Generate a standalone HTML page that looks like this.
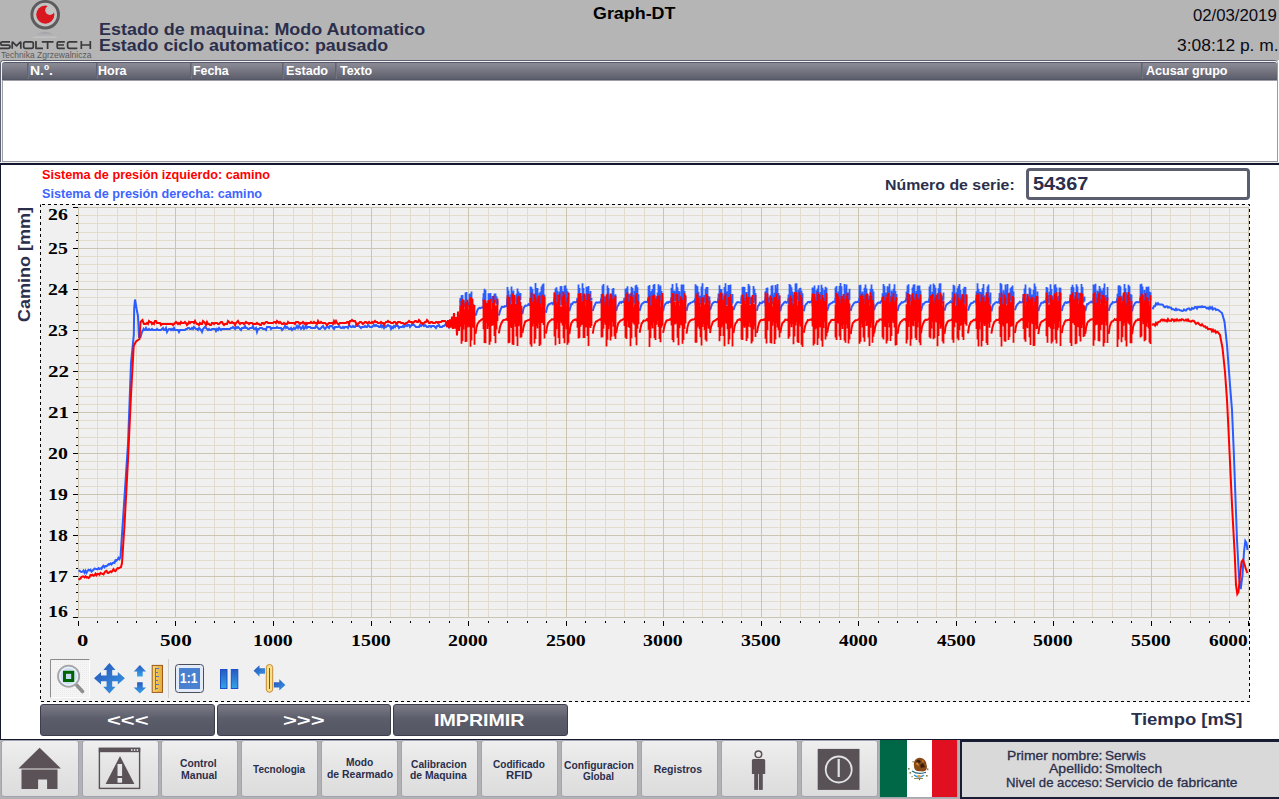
<!DOCTYPE html>
<html><head><meta charset="utf-8"><style>
html,body{margin:0;padding:0;}
body{width:1279px;height:799px;overflow:hidden;position:relative;background:#fff;font-family:"Liberation Sans", sans-serif;}
.a{position:absolute;box-sizing:border-box;}
.t{position:absolute;white-space:pre;line-height:1;}
</style></head><body>
<!-- header -->
<div class="a" style="left:0;top:0;width:1279px;height:61px;background:#b5b5b5"></div>
<div class="a" style="left:0;top:61px;width:3px;height:102px;background:#b5b5b5"></div>
<!-- logo -->
<svg class="a" style="left:0;top:0" width="95" height="61" viewBox="0 0 95 61">
  <defs><linearGradient id="refl" x1="0" y1="0" x2="0" y2="1"><stop offset="0" stop-color="#9c9ca4"/><stop offset="0.6" stop-color="#b4b4b6"/><stop offset="1" stop-color="#c8c8c8"/></linearGradient></defs>
  <circle cx="45.2" cy="14.7" r="12" fill="#c3c3c3"/>
  <circle cx="45.2" cy="14.7" r="13.3" fill="none" stroke="#5c5c5e" stroke-width="2.9"/>
  <circle cx="45.3" cy="14.6" r="9.1" fill="#d8171f"/>
  <circle cx="49.9" cy="10.3" r="4.7" fill="#c3c3c3"/>
  <path d="M 32.5 38 Q 45 25.5 57.5 38 Z" fill="url(#refl)" opacity="0.85"/>
  <g fill="none" stroke="#3a3a3c" stroke-width="1.7" stroke-linejoin="round">
    <path d="M 10 41.8 H 2.5 Q 0.8 41.8 0.8 43.5 V 44 Q 0.8 45.2 2.5 45.2 H 8.3 Q 10 45.2 10 46.8 V 46.5 Q 10 48.3 8.3 48.3 H 0"/>
    <path d="M 12.2 48.8 V 42.4 Q 12.2 41.8 12.8 42.2 L 16.5 45.8 L 20.2 42.2 Q 20.8 41.8 20.8 42.4 V 48.8"/>
    <path d="M 25.5 41.8 H 31.5 Q 33.3 41.8 33.3 43.6 V 46.5 Q 33.3 48.3 31.5 48.3 H 25.5 Q 23.7 48.3 23.7 46.5 V 43.6 Q 23.7 41.8 25.5 41.8 Z"/>
    <path d="M 36 41 V 48.3 H 43"/>
    <path d="M 41.8 41.8 H 53.5 M 47.6 41.8 V 49"/>
    <path d="M 64.8 41.8 H 58.5 Q 57.2 41.8 57.2 43.2 V 46.9 Q 57.2 48.3 58.5 48.3 H 64.8 M 57.2 45 H 64"/>
    <path d="M 77.3 41.8 H 69.5 Q 67.6 41.8 67.6 43.6 V 46.5 Q 67.6 48.3 69.5 48.3 H 77.3"/>
    <path d="M 81.3 41 V 49 M 90.3 41 V 49 M 81.3 45 H 90.3"/>
  </g>
</svg>
<!-- alarm table -->
<div class="a" style="left:1278px;top:60px;width:1px;height:103px;background:#fff"></div>
<div class="a" style="left:0;top:60px;width:1278px;height:103px;border:1px solid #5f6270;border-right-color:#9a9aa5;border-radius:4px 4px 0 0;background:#fff"></div>
<div class="a" style="left:1px;top:61px;width:1276px;height:101px;border:1px solid #f4f4f4;border-right:0;border-radius:3px 3px 0 0"></div>
<div class="a" style="left:2px;top:62px;width:1275px;height:18px;background:linear-gradient(#8c8c97,#5d5e6b);border-top:1px solid #55586a;border-bottom:1px solid #545766;border-radius:3px 3px 0 0"></div>
<div class="a" style="left:2px;top:80px;width:1275px;height:1px;background:#a0a0aa"></div>
<div class="a" style="left:2px;top:80px;width:1px;height:82px;background:#a0a0aa"></div>
<div class="a" style="left:2px;top:161px;width:1276px;height:1px;background:#9a9aa5"></div>
<div class="a" style="left:0;top:162px;width:1279px;height:1px;background:#ececee"></div>
<div class="a" style="left:27px;top:63px;width:2px;height:16px;background:linear-gradient(90deg,#595c6a,#7a7b87)"></div><div class="a" style="left:96px;top:63px;width:2px;height:16px;background:linear-gradient(90deg,#595c6a,#7a7b87)"></div><div class="a" style="left:190px;top:63px;width:2px;height:16px;background:linear-gradient(90deg,#595c6a,#7a7b87)"></div><div class="a" style="left:282px;top:63px;width:2px;height:16px;background:linear-gradient(90deg,#595c6a,#7a7b87)"></div><div class="a" style="left:335px;top:63px;width:2px;height:16px;background:linear-gradient(90deg,#595c6a,#7a7b87)"></div><div class="a" style="left:1141px;top:63px;width:2px;height:16px;background:linear-gradient(90deg,#595c6a,#7a7b87)"></div>
<!-- main -->
<div class="a" style="left:0;top:163px;width:1279px;height:2px;background:#14182e"></div>
<div class="a" style="left:0;top:163px;width:1px;height:577px;background:#14182e"></div>
<div class="a" style="left:0;top:739px;width:1279px;height:1px;background:#14182e"></div>
<!-- serial input -->
<div class="a" style="left:1026px;top:168px;width:224px;height:32px;border:3px solid #5a5e6e;border-radius:4px;background:#fff"></div>
<!-- chart box -->
<div class="a" style="left:40px;top:204px;width:1210px;height:498px;background:#f0f0f0"></div>
<svg class="a" style="left:0;top:0" width="1279" height="799"><rect x="40.5" y="204.5" width="1209" height="497" fill="none" stroke="#000" stroke-width="1" stroke-dasharray="3 3" stroke-dashoffset="-1.5"/></svg>
<svg class="a" style="left:0;top:0" width="1279" height="799" viewBox="0 0 1279 799">
<rect x='78' y='207' width='1170' height='410' fill='#f0f0f0'/>
<line x1='78' x2='1248' y1='609.5' y2='609.5' stroke='#e1dccb' stroke-width='1'/>
<line x1='78' x2='1248' y1='601.5' y2='601.5' stroke='#e1dccb' stroke-width='1'/>
<line x1='78' x2='1248' y1='592.5' y2='592.5' stroke='#e1dccb' stroke-width='1'/>
<line x1='78' x2='1248' y1='584.5' y2='584.5' stroke='#e1dccb' stroke-width='1'/>
<line x1='78' x2='1248' y1='568.5' y2='568.5' stroke='#e1dccb' stroke-width='1'/>
<line x1='78' x2='1248' y1='560.5' y2='560.5' stroke='#e1dccb' stroke-width='1'/>
<line x1='78' x2='1248' y1='551.5' y2='551.5' stroke='#e1dccb' stroke-width='1'/>
<line x1='78' x2='1248' y1='543.5' y2='543.5' stroke='#e1dccb' stroke-width='1'/>
<line x1='78' x2='1248' y1='527.5' y2='527.5' stroke='#e1dccb' stroke-width='1'/>
<line x1='78' x2='1248' y1='519.5' y2='519.5' stroke='#e1dccb' stroke-width='1'/>
<line x1='78' x2='1248' y1='510.5' y2='510.5' stroke='#e1dccb' stroke-width='1'/>
<line x1='78' x2='1248' y1='502.5' y2='502.5' stroke='#e1dccb' stroke-width='1'/>
<line x1='78' x2='1248' y1='486.5' y2='486.5' stroke='#e1dccb' stroke-width='1'/>
<line x1='78' x2='1248' y1='478.5' y2='478.5' stroke='#e1dccb' stroke-width='1'/>
<line x1='78' x2='1248' y1='469.5' y2='469.5' stroke='#e1dccb' stroke-width='1'/>
<line x1='78' x2='1248' y1='461.5' y2='461.5' stroke='#e1dccb' stroke-width='1'/>
<line x1='78' x2='1248' y1='445.5' y2='445.5' stroke='#e1dccb' stroke-width='1'/>
<line x1='78' x2='1248' y1='437.5' y2='437.5' stroke='#e1dccb' stroke-width='1'/>
<line x1='78' x2='1248' y1='428.5' y2='428.5' stroke='#e1dccb' stroke-width='1'/>
<line x1='78' x2='1248' y1='420.5' y2='420.5' stroke='#e1dccb' stroke-width='1'/>
<line x1='78' x2='1248' y1='404.5' y2='404.5' stroke='#e1dccb' stroke-width='1'/>
<line x1='78' x2='1248' y1='396.5' y2='396.5' stroke='#e1dccb' stroke-width='1'/>
<line x1='78' x2='1248' y1='387.5' y2='387.5' stroke='#e1dccb' stroke-width='1'/>
<line x1='78' x2='1248' y1='379.5' y2='379.5' stroke='#e1dccb' stroke-width='1'/>
<line x1='78' x2='1248' y1='363.5' y2='363.5' stroke='#e1dccb' stroke-width='1'/>
<line x1='78' x2='1248' y1='355.5' y2='355.5' stroke='#e1dccb' stroke-width='1'/>
<line x1='78' x2='1248' y1='346.5' y2='346.5' stroke='#e1dccb' stroke-width='1'/>
<line x1='78' x2='1248' y1='338.5' y2='338.5' stroke='#e1dccb' stroke-width='1'/>
<line x1='78' x2='1248' y1='322.5' y2='322.5' stroke='#e1dccb' stroke-width='1'/>
<line x1='78' x2='1248' y1='314.5' y2='314.5' stroke='#e1dccb' stroke-width='1'/>
<line x1='78' x2='1248' y1='305.5' y2='305.5' stroke='#e1dccb' stroke-width='1'/>
<line x1='78' x2='1248' y1='297.5' y2='297.5' stroke='#e1dccb' stroke-width='1'/>
<line x1='78' x2='1248' y1='281.5' y2='281.5' stroke='#e1dccb' stroke-width='1'/>
<line x1='78' x2='1248' y1='273.5' y2='273.5' stroke='#e1dccb' stroke-width='1'/>
<line x1='78' x2='1248' y1='264.5' y2='264.5' stroke='#e1dccb' stroke-width='1'/>
<line x1='78' x2='1248' y1='256.5' y2='256.5' stroke='#e1dccb' stroke-width='1'/>
<line x1='78' x2='1248' y1='240.5' y2='240.5' stroke='#e1dccb' stroke-width='1'/>
<line x1='78' x2='1248' y1='232.5' y2='232.5' stroke='#e1dccb' stroke-width='1'/>
<line x1='78' x2='1248' y1='223.5' y2='223.5' stroke='#e1dccb' stroke-width='1'/>
<line x1='78' x2='1248' y1='215.5' y2='215.5' stroke='#e1dccb' stroke-width='1'/>
<line x1='97.5' x2='97.5' y1='207' y2='617' stroke='#e1dccb' stroke-width='1'/>
<line x1='117.5' x2='117.5' y1='207' y2='617' stroke='#e1dccb' stroke-width='1'/>
<line x1='136.5' x2='136.5' y1='207' y2='617' stroke='#e1dccb' stroke-width='1'/>
<line x1='156.5' x2='156.5' y1='207' y2='617' stroke='#e1dccb' stroke-width='1'/>
<line x1='195.5' x2='195.5' y1='207' y2='617' stroke='#e1dccb' stroke-width='1'/>
<line x1='214.5' x2='214.5' y1='207' y2='617' stroke='#e1dccb' stroke-width='1'/>
<line x1='234.5' x2='234.5' y1='207' y2='617' stroke='#e1dccb' stroke-width='1'/>
<line x1='253.5' x2='253.5' y1='207' y2='617' stroke='#e1dccb' stroke-width='1'/>
<line x1='293.5' x2='293.5' y1='207' y2='617' stroke='#e1dccb' stroke-width='1'/>
<line x1='312.5' x2='312.5' y1='207' y2='617' stroke='#e1dccb' stroke-width='1'/>
<line x1='332.5' x2='332.5' y1='207' y2='617' stroke='#e1dccb' stroke-width='1'/>
<line x1='351.5' x2='351.5' y1='207' y2='617' stroke='#e1dccb' stroke-width='1'/>
<line x1='390.5' x2='390.5' y1='207' y2='617' stroke='#e1dccb' stroke-width='1'/>
<line x1='410.5' x2='410.5' y1='207' y2='617' stroke='#e1dccb' stroke-width='1'/>
<line x1='429.5' x2='429.5' y1='207' y2='617' stroke='#e1dccb' stroke-width='1'/>
<line x1='449.5' x2='449.5' y1='207' y2='617' stroke='#e1dccb' stroke-width='1'/>
<line x1='488.5' x2='488.5' y1='207' y2='617' stroke='#e1dccb' stroke-width='1'/>
<line x1='507.5' x2='507.5' y1='207' y2='617' stroke='#e1dccb' stroke-width='1'/>
<line x1='527.5' x2='527.5' y1='207' y2='617' stroke='#e1dccb' stroke-width='1'/>
<line x1='546.5' x2='546.5' y1='207' y2='617' stroke='#e1dccb' stroke-width='1'/>
<line x1='585.5' x2='585.5' y1='207' y2='617' stroke='#e1dccb' stroke-width='1'/>
<line x1='605.5' x2='605.5' y1='207' y2='617' stroke='#e1dccb' stroke-width='1'/>
<line x1='624.5' x2='624.5' y1='207' y2='617' stroke='#e1dccb' stroke-width='1'/>
<line x1='644.5' x2='644.5' y1='207' y2='617' stroke='#e1dccb' stroke-width='1'/>
<line x1='683.5' x2='683.5' y1='207' y2='617' stroke='#e1dccb' stroke-width='1'/>
<line x1='702.5' x2='702.5' y1='207' y2='617' stroke='#e1dccb' stroke-width='1'/>
<line x1='722.5' x2='722.5' y1='207' y2='617' stroke='#e1dccb' stroke-width='1'/>
<line x1='741.5' x2='741.5' y1='207' y2='617' stroke='#e1dccb' stroke-width='1'/>
<line x1='780.5' x2='780.5' y1='207' y2='617' stroke='#e1dccb' stroke-width='1'/>
<line x1='800.5' x2='800.5' y1='207' y2='617' stroke='#e1dccb' stroke-width='1'/>
<line x1='819.5' x2='819.5' y1='207' y2='617' stroke='#e1dccb' stroke-width='1'/>
<line x1='839.5' x2='839.5' y1='207' y2='617' stroke='#e1dccb' stroke-width='1'/>
<line x1='878.5' x2='878.5' y1='207' y2='617' stroke='#e1dccb' stroke-width='1'/>
<line x1='897.5' x2='897.5' y1='207' y2='617' stroke='#e1dccb' stroke-width='1'/>
<line x1='917.5' x2='917.5' y1='207' y2='617' stroke='#e1dccb' stroke-width='1'/>
<line x1='936.5' x2='936.5' y1='207' y2='617' stroke='#e1dccb' stroke-width='1'/>
<line x1='975.5' x2='975.5' y1='207' y2='617' stroke='#e1dccb' stroke-width='1'/>
<line x1='995.5' x2='995.5' y1='207' y2='617' stroke='#e1dccb' stroke-width='1'/>
<line x1='1014.5' x2='1014.5' y1='207' y2='617' stroke='#e1dccb' stroke-width='1'/>
<line x1='1034.5' x2='1034.5' y1='207' y2='617' stroke='#e1dccb' stroke-width='1'/>
<line x1='1073.5' x2='1073.5' y1='207' y2='617' stroke='#e1dccb' stroke-width='1'/>
<line x1='1092.5' x2='1092.5' y1='207' y2='617' stroke='#e1dccb' stroke-width='1'/>
<line x1='1112.5' x2='1112.5' y1='207' y2='617' stroke='#e1dccb' stroke-width='1'/>
<line x1='1131.5' x2='1131.5' y1='207' y2='617' stroke='#e1dccb' stroke-width='1'/>
<line x1='1170.5' x2='1170.5' y1='207' y2='617' stroke='#e1dccb' stroke-width='1'/>
<line x1='1190.5' x2='1190.5' y1='207' y2='617' stroke='#e1dccb' stroke-width='1'/>
<line x1='1209.5' x2='1209.5' y1='207' y2='617' stroke='#e1dccb' stroke-width='1'/>
<line x1='1229.5' x2='1229.5' y1='207' y2='617' stroke='#e1dccb' stroke-width='1'/>
<line x1='78' x2='1248' y1='617.5' y2='617.5' stroke='#cbc5b2' stroke-width='1'/>
<line x1='78' x2='1248' y1='576.5' y2='576.5' stroke='#cbc5b2' stroke-width='1'/>
<line x1='78' x2='1248' y1='535.5' y2='535.5' stroke='#cbc5b2' stroke-width='1'/>
<line x1='78' x2='1248' y1='494.5' y2='494.5' stroke='#cbc5b2' stroke-width='1'/>
<line x1='78' x2='1248' y1='453.5' y2='453.5' stroke='#cbc5b2' stroke-width='1'/>
<line x1='78' x2='1248' y1='412.5' y2='412.5' stroke='#cbc5b2' stroke-width='1'/>
<line x1='78' x2='1248' y1='371.5' y2='371.5' stroke='#cbc5b2' stroke-width='1'/>
<line x1='78' x2='1248' y1='330.5' y2='330.5' stroke='#cbc5b2' stroke-width='1'/>
<line x1='78' x2='1248' y1='289.5' y2='289.5' stroke='#cbc5b2' stroke-width='1'/>
<line x1='78' x2='1248' y1='248.5' y2='248.5' stroke='#cbc5b2' stroke-width='1'/>
<line x1='78' x2='1248' y1='207.5' y2='207.5' stroke='#cbc5b2' stroke-width='1'/>
<line x1='78.5' x2='78.5' y1='207' y2='617' stroke='#cbc5b2' stroke-width='1'/>
<line x1='175.5' x2='175.5' y1='207' y2='617' stroke='#cbc5b2' stroke-width='1'/>
<line x1='273.5' x2='273.5' y1='207' y2='617' stroke='#cbc5b2' stroke-width='1'/>
<line x1='371.5' x2='371.5' y1='207' y2='617' stroke='#cbc5b2' stroke-width='1'/>
<line x1='468.5' x2='468.5' y1='207' y2='617' stroke='#cbc5b2' stroke-width='1'/>
<line x1='566.5' x2='566.5' y1='207' y2='617' stroke='#cbc5b2' stroke-width='1'/>
<line x1='663.5' x2='663.5' y1='207' y2='617' stroke='#cbc5b2' stroke-width='1'/>
<line x1='761.5' x2='761.5' y1='207' y2='617' stroke='#cbc5b2' stroke-width='1'/>
<line x1='858.5' x2='858.5' y1='207' y2='617' stroke='#cbc5b2' stroke-width='1'/>
<line x1='956.5' x2='956.5' y1='207' y2='617' stroke='#cbc5b2' stroke-width='1'/>
<line x1='1053.5' x2='1053.5' y1='207' y2='617' stroke='#cbc5b2' stroke-width='1'/>
<line x1='1151.5' x2='1151.5' y1='207' y2='617' stroke='#cbc5b2' stroke-width='1'/>
<line x1='1248.5' x2='1248.5' y1='207' y2='617' stroke='#cbc5b2' stroke-width='1'/>
<line x1='73' x2='78' y1='617.5' y2='617.5' stroke='#000' stroke-width='1'/>
<line x1='76' x2='78' y1='609.5' y2='609.5' stroke='#000' stroke-width='1'/>
<line x1='76' x2='78' y1='601.5' y2='601.5' stroke='#000' stroke-width='1'/>
<line x1='76' x2='78' y1='592.5' y2='592.5' stroke='#000' stroke-width='1'/>
<line x1='76' x2='78' y1='584.5' y2='584.5' stroke='#000' stroke-width='1'/>
<line x1='73' x2='78' y1='576.5' y2='576.5' stroke='#000' stroke-width='1'/>
<line x1='76' x2='78' y1='568.5' y2='568.5' stroke='#000' stroke-width='1'/>
<line x1='76' x2='78' y1='560.5' y2='560.5' stroke='#000' stroke-width='1'/>
<line x1='76' x2='78' y1='551.5' y2='551.5' stroke='#000' stroke-width='1'/>
<line x1='76' x2='78' y1='543.5' y2='543.5' stroke='#000' stroke-width='1'/>
<line x1='73' x2='78' y1='535.5' y2='535.5' stroke='#000' stroke-width='1'/>
<line x1='76' x2='78' y1='527.5' y2='527.5' stroke='#000' stroke-width='1'/>
<line x1='76' x2='78' y1='519.5' y2='519.5' stroke='#000' stroke-width='1'/>
<line x1='76' x2='78' y1='510.5' y2='510.5' stroke='#000' stroke-width='1'/>
<line x1='76' x2='78' y1='502.5' y2='502.5' stroke='#000' stroke-width='1'/>
<line x1='73' x2='78' y1='494.5' y2='494.5' stroke='#000' stroke-width='1'/>
<line x1='76' x2='78' y1='486.5' y2='486.5' stroke='#000' stroke-width='1'/>
<line x1='76' x2='78' y1='478.5' y2='478.5' stroke='#000' stroke-width='1'/>
<line x1='76' x2='78' y1='469.5' y2='469.5' stroke='#000' stroke-width='1'/>
<line x1='76' x2='78' y1='461.5' y2='461.5' stroke='#000' stroke-width='1'/>
<line x1='73' x2='78' y1='453.5' y2='453.5' stroke='#000' stroke-width='1'/>
<line x1='76' x2='78' y1='445.5' y2='445.5' stroke='#000' stroke-width='1'/>
<line x1='76' x2='78' y1='437.5' y2='437.5' stroke='#000' stroke-width='1'/>
<line x1='76' x2='78' y1='428.5' y2='428.5' stroke='#000' stroke-width='1'/>
<line x1='76' x2='78' y1='420.5' y2='420.5' stroke='#000' stroke-width='1'/>
<line x1='73' x2='78' y1='412.5' y2='412.5' stroke='#000' stroke-width='1'/>
<line x1='76' x2='78' y1='404.5' y2='404.5' stroke='#000' stroke-width='1'/>
<line x1='76' x2='78' y1='396.5' y2='396.5' stroke='#000' stroke-width='1'/>
<line x1='76' x2='78' y1='387.5' y2='387.5' stroke='#000' stroke-width='1'/>
<line x1='76' x2='78' y1='379.5' y2='379.5' stroke='#000' stroke-width='1'/>
<line x1='73' x2='78' y1='371.5' y2='371.5' stroke='#000' stroke-width='1'/>
<line x1='76' x2='78' y1='363.5' y2='363.5' stroke='#000' stroke-width='1'/>
<line x1='76' x2='78' y1='355.5' y2='355.5' stroke='#000' stroke-width='1'/>
<line x1='76' x2='78' y1='346.5' y2='346.5' stroke='#000' stroke-width='1'/>
<line x1='76' x2='78' y1='338.5' y2='338.5' stroke='#000' stroke-width='1'/>
<line x1='73' x2='78' y1='330.5' y2='330.5' stroke='#000' stroke-width='1'/>
<line x1='76' x2='78' y1='322.5' y2='322.5' stroke='#000' stroke-width='1'/>
<line x1='76' x2='78' y1='314.5' y2='314.5' stroke='#000' stroke-width='1'/>
<line x1='76' x2='78' y1='305.5' y2='305.5' stroke='#000' stroke-width='1'/>
<line x1='76' x2='78' y1='297.5' y2='297.5' stroke='#000' stroke-width='1'/>
<line x1='73' x2='78' y1='289.5' y2='289.5' stroke='#000' stroke-width='1'/>
<line x1='76' x2='78' y1='281.5' y2='281.5' stroke='#000' stroke-width='1'/>
<line x1='76' x2='78' y1='273.5' y2='273.5' stroke='#000' stroke-width='1'/>
<line x1='76' x2='78' y1='264.5' y2='264.5' stroke='#000' stroke-width='1'/>
<line x1='76' x2='78' y1='256.5' y2='256.5' stroke='#000' stroke-width='1'/>
<line x1='73' x2='78' y1='248.5' y2='248.5' stroke='#000' stroke-width='1'/>
<line x1='76' x2='78' y1='240.5' y2='240.5' stroke='#000' stroke-width='1'/>
<line x1='76' x2='78' y1='232.5' y2='232.5' stroke='#000' stroke-width='1'/>
<line x1='76' x2='78' y1='223.5' y2='223.5' stroke='#000' stroke-width='1'/>
<line x1='76' x2='78' y1='215.5' y2='215.5' stroke='#000' stroke-width='1'/>
<line x1='73' x2='78' y1='207.5' y2='207.5' stroke='#000' stroke-width='1'/>
<line x1='78.5' x2='78.5' y1='621' y2='626' stroke='#000' stroke-width='1'/>
<line x1='97.5' x2='97.5' y1='621' y2='623' stroke='#000' stroke-width='1'/>
<line x1='117.5' x2='117.5' y1='621' y2='623' stroke='#000' stroke-width='1'/>
<line x1='136.5' x2='136.5' y1='621' y2='623' stroke='#000' stroke-width='1'/>
<line x1='156.5' x2='156.5' y1='621' y2='623' stroke='#000' stroke-width='1'/>
<line x1='175.5' x2='175.5' y1='621' y2='626' stroke='#000' stroke-width='1'/>
<line x1='195.5' x2='195.5' y1='621' y2='623' stroke='#000' stroke-width='1'/>
<line x1='214.5' x2='214.5' y1='621' y2='623' stroke='#000' stroke-width='1'/>
<line x1='234.5' x2='234.5' y1='621' y2='623' stroke='#000' stroke-width='1'/>
<line x1='253.5' x2='253.5' y1='621' y2='623' stroke='#000' stroke-width='1'/>
<line x1='273.5' x2='273.5' y1='621' y2='626' stroke='#000' stroke-width='1'/>
<line x1='293.5' x2='293.5' y1='621' y2='623' stroke='#000' stroke-width='1'/>
<line x1='312.5' x2='312.5' y1='621' y2='623' stroke='#000' stroke-width='1'/>
<line x1='332.5' x2='332.5' y1='621' y2='623' stroke='#000' stroke-width='1'/>
<line x1='351.5' x2='351.5' y1='621' y2='623' stroke='#000' stroke-width='1'/>
<line x1='371.5' x2='371.5' y1='621' y2='626' stroke='#000' stroke-width='1'/>
<line x1='390.5' x2='390.5' y1='621' y2='623' stroke='#000' stroke-width='1'/>
<line x1='410.5' x2='410.5' y1='621' y2='623' stroke='#000' stroke-width='1'/>
<line x1='429.5' x2='429.5' y1='621' y2='623' stroke='#000' stroke-width='1'/>
<line x1='449.5' x2='449.5' y1='621' y2='623' stroke='#000' stroke-width='1'/>
<line x1='468.5' x2='468.5' y1='621' y2='626' stroke='#000' stroke-width='1'/>
<line x1='488.5' x2='488.5' y1='621' y2='623' stroke='#000' stroke-width='1'/>
<line x1='507.5' x2='507.5' y1='621' y2='623' stroke='#000' stroke-width='1'/>
<line x1='527.5' x2='527.5' y1='621' y2='623' stroke='#000' stroke-width='1'/>
<line x1='546.5' x2='546.5' y1='621' y2='623' stroke='#000' stroke-width='1'/>
<line x1='566.5' x2='566.5' y1='621' y2='626' stroke='#000' stroke-width='1'/>
<line x1='585.5' x2='585.5' y1='621' y2='623' stroke='#000' stroke-width='1'/>
<line x1='605.5' x2='605.5' y1='621' y2='623' stroke='#000' stroke-width='1'/>
<line x1='624.5' x2='624.5' y1='621' y2='623' stroke='#000' stroke-width='1'/>
<line x1='644.5' x2='644.5' y1='621' y2='623' stroke='#000' stroke-width='1'/>
<line x1='663.5' x2='663.5' y1='621' y2='626' stroke='#000' stroke-width='1'/>
<line x1='683.5' x2='683.5' y1='621' y2='623' stroke='#000' stroke-width='1'/>
<line x1='702.5' x2='702.5' y1='621' y2='623' stroke='#000' stroke-width='1'/>
<line x1='722.5' x2='722.5' y1='621' y2='623' stroke='#000' stroke-width='1'/>
<line x1='741.5' x2='741.5' y1='621' y2='623' stroke='#000' stroke-width='1'/>
<line x1='761.5' x2='761.5' y1='621' y2='626' stroke='#000' stroke-width='1'/>
<line x1='780.5' x2='780.5' y1='621' y2='623' stroke='#000' stroke-width='1'/>
<line x1='800.5' x2='800.5' y1='621' y2='623' stroke='#000' stroke-width='1'/>
<line x1='819.5' x2='819.5' y1='621' y2='623' stroke='#000' stroke-width='1'/>
<line x1='839.5' x2='839.5' y1='621' y2='623' stroke='#000' stroke-width='1'/>
<line x1='858.5' x2='858.5' y1='621' y2='626' stroke='#000' stroke-width='1'/>
<line x1='878.5' x2='878.5' y1='621' y2='623' stroke='#000' stroke-width='1'/>
<line x1='897.5' x2='897.5' y1='621' y2='623' stroke='#000' stroke-width='1'/>
<line x1='917.5' x2='917.5' y1='621' y2='623' stroke='#000' stroke-width='1'/>
<line x1='936.5' x2='936.5' y1='621' y2='623' stroke='#000' stroke-width='1'/>
<line x1='956.5' x2='956.5' y1='621' y2='626' stroke='#000' stroke-width='1'/>
<line x1='975.5' x2='975.5' y1='621' y2='623' stroke='#000' stroke-width='1'/>
<line x1='995.5' x2='995.5' y1='621' y2='623' stroke='#000' stroke-width='1'/>
<line x1='1014.5' x2='1014.5' y1='621' y2='623' stroke='#000' stroke-width='1'/>
<line x1='1034.5' x2='1034.5' y1='621' y2='623' stroke='#000' stroke-width='1'/>
<line x1='1053.5' x2='1053.5' y1='621' y2='626' stroke='#000' stroke-width='1'/>
<line x1='1073.5' x2='1073.5' y1='621' y2='623' stroke='#000' stroke-width='1'/>
<line x1='1092.5' x2='1092.5' y1='621' y2='623' stroke='#000' stroke-width='1'/>
<line x1='1112.5' x2='1112.5' y1='621' y2='623' stroke='#000' stroke-width='1'/>
<line x1='1131.5' x2='1131.5' y1='621' y2='623' stroke='#000' stroke-width='1'/>
<line x1='1151.5' x2='1151.5' y1='621' y2='626' stroke='#000' stroke-width='1'/>
<line x1='1170.5' x2='1170.5' y1='621' y2='623' stroke='#000' stroke-width='1'/>
<line x1='1190.5' x2='1190.5' y1='621' y2='623' stroke='#000' stroke-width='1'/>
<line x1='1209.5' x2='1209.5' y1='621' y2='623' stroke='#000' stroke-width='1'/>
<line x1='1229.5' x2='1229.5' y1='621' y2='623' stroke='#000' stroke-width='1'/>
<line x1='1248.5' x2='1248.5' y1='621' y2='626' stroke='#000' stroke-width='1'/>
<polyline points='78.5,571.0 79.5,570.7 80.5,571.6 81.5,571.9 82.5,571.7 83.5,570.6 84.5,572.7 85.5,570.8 86.5,572.8 87.5,571.0 88.5,569.8 89.5,570.4 90.5,569.7 91.5,571.6 92.5,570.7 93.5,569.8 94.5,568.6 95.5,568.8 96.5,569.1 97.5,569.3 98.5,568.1 99.5,569.0 100.5,568.3 101.5,568.8 102.5,566.7 103.5,565.8 104.5,567.3 105.5,566.0 106.5,566.1 107.5,565.4 108.5,564.1 109.5,564.5 110.5,563.5 111.5,564.5 112.5,563.1 113.5,562.6 114.5,562.9 115.5,560.2 116.5,560.8 117.5,559.5 118.5,557.8 119.5,559.1 120.5,557.0 121.5,542.0 128.0,444.0 131.0,363.0 133.8,335.0 134.2,308.0 135.0,299.5 136.8,310.0 138.0,316.0 139.0,337.0 140.5,337.0 142.0,332.0 143.5,329.0 144.0,330.0 145.0,330.0 146.0,328.0 147.0,330.0 148.0,330.0 149.0,329.0 150.0,330.0 151.0,330.0 152.0,329.0 153.0,330.0 154.0,330.0 155.0,330.0 156.0,330.0 157.0,329.0 158.0,330.0 159.0,330.0 160.0,330.0 161.0,330.0 162.0,329.0 163.0,328.0 164.0,330.0 165.0,330.0 166.0,328.0 167.0,332.0 168.0,330.0 169.0,329.0 170.0,329.0 171.0,330.0 172.0,329.0 173.0,330.0 174.0,328.0 175.0,330.0 176.0,330.0 177.0,330.0 178.0,330.0 179.0,332.0 180.0,330.0 181.0,330.0 182.0,330.0 183.0,330.0 184.0,330.0 185.0,330.0 186.0,329.0 187.0,329.0 188.0,328.0 189.0,328.0 190.0,329.0 191.0,329.0 192.0,328.0 193.0,329.0 194.0,327.0 195.0,328.0 196.0,329.0 197.0,329.0 198.0,330.0 199.0,328.0 200.0,329.0 201.0,330.0 202.0,332.0 203.0,329.0 204.0,328.0 205.0,327.0 206.0,328.0 207.0,329.0 208.0,330.0 209.0,329.0 210.0,330.0 211.0,330.0 212.0,329.0 213.0,329.0 214.0,329.0 215.0,329.0 216.0,331.0 217.0,329.0 218.0,330.0 219.0,328.0 220.0,329.0 221.0,330.0 222.0,329.0 223.0,329.0 224.0,329.0 225.0,329.0 226.0,329.0 227.0,329.0 228.0,329.0 229.0,329.0 230.0,329.0 231.0,328.0 232.0,328.0 233.0,327.0 234.0,328.0 235.0,329.0 236.0,327.0 237.0,328.0 238.0,327.0 239.0,328.0 240.0,329.0 241.0,330.0 242.0,328.0 243.0,328.0 244.0,328.0 245.0,326.0 246.0,328.0 247.0,328.0 248.0,329.0 249.0,329.0 250.0,328.0 251.0,328.0 252.0,328.0 253.0,326.0 254.0,329.0 255.0,329.0 256.0,328.0 257.0,332.0 258.0,329.0 259.0,329.0 260.0,328.0 261.0,328.0 262.0,328.0 263.0,329.0 264.0,329.0 265.0,329.0 266.0,330.0 267.0,327.0 268.0,327.0 269.0,327.0 270.0,327.0 271.0,329.0 272.0,328.0 273.0,328.0 274.0,328.0 275.0,328.0 276.0,328.0 277.0,327.0 278.0,328.0 279.0,328.0 280.0,328.0 281.0,328.0 282.0,330.0 283.0,329.0 284.0,328.0 285.0,326.0 286.0,328.0 287.0,327.0 288.0,328.0 289.0,329.0 290.0,329.0 291.0,328.0 292.0,330.0 293.0,329.0 294.0,328.0 295.0,329.0 296.0,328.0 297.0,326.0 298.0,328.0 299.0,326.0 300.0,327.0 301.0,329.0 302.0,328.0 303.0,326.0 304.0,329.0 305.0,328.0 306.0,325.0 307.0,328.0 308.0,327.0 309.0,327.0 310.0,327.0 311.0,328.0 312.0,328.0 313.0,328.0 314.0,328.0 315.0,328.0 316.0,326.0 317.0,327.0 318.0,328.0 319.0,329.0 320.0,329.0 321.0,328.0 322.0,327.0 323.0,326.0 324.0,328.0 325.0,329.0 326.0,328.0 327.0,326.0 328.0,327.0 329.0,328.0 330.0,326.0 331.0,326.0 332.0,326.0 333.0,328.0 334.0,329.0 335.0,327.0 336.0,327.0 337.0,327.0 338.0,327.0 339.0,326.0 340.0,327.0 341.0,328.0 342.0,328.0 343.0,327.0 344.0,328.0 345.0,327.0 346.0,327.0 347.0,327.0 348.0,328.0 349.0,325.0 350.0,326.0 351.0,327.0 352.0,327.0 353.0,326.0 354.0,327.0 355.0,327.0 356.0,325.0 357.0,326.0 358.0,326.0 359.0,326.0 360.0,327.0 361.0,328.0 362.0,327.0 363.0,327.0 364.0,327.0 365.0,326.0 366.0,327.0 367.0,327.0 368.0,325.0 369.0,326.0 370.0,327.0 371.0,327.0 372.0,327.0 373.0,326.0 374.0,325.0 375.0,326.0 376.0,325.0 377.0,326.0 378.0,326.0 379.0,327.0 380.0,327.0 381.0,325.0 382.0,327.0 383.0,326.0 384.0,328.0 385.0,326.0 386.0,327.0 387.0,326.0 388.0,325.0 389.0,326.0 390.0,326.0 391.0,329.0 392.0,327.0 393.0,328.0 394.0,326.0 395.0,327.0 396.0,325.0 397.0,326.0 398.0,326.0 399.0,328.0 400.0,327.0 401.0,327.0 402.0,327.0 403.0,326.0 404.0,327.0 405.0,326.0 406.0,325.0 407.0,326.0 408.0,325.0 409.0,325.0 410.0,327.0 411.0,326.0 412.0,324.0 413.0,325.0 414.0,325.0 415.0,326.0 416.0,327.0 417.0,327.0 418.0,327.0 419.0,327.0 420.0,325.0 421.0,326.0 422.0,325.0 423.0,325.0 424.0,326.0 425.0,325.0 426.0,326.0 427.0,327.0 428.0,327.0 429.0,326.0 430.0,326.0 431.0,327.0 432.0,326.0 433.0,326.0 434.0,326.0 435.0,327.0 436.0,328.0 437.0,326.0 438.0,326.0 439.0,325.0 440.0,327.0 441.0,327.0 442.0,327.0 443.0,326.0 444.0,326.0 445.0,325.0 446.0,324.0 447.0,325.7 448.0,323.9 449.0,326.7 450.0,323.5 451.0,325.9 452.0,323.0 453.0,325.6 454.0,321.0 455.0,327.7 456.0,321.2 457.0,327.4 458.0,320.4 459.0,327.1 460.0,320.7 460.5,298.0' fill='none' stroke='#2b5cff' stroke-width='2'/>
<polyline points='475.5,315.8 476.5,312.7 477.5,310.0 478.5,308.4 479.5,307.9 480.5,308.2 481.5,307.5 482.5,307.5 483.5,307.8 483.5,298.0' fill='none' stroke='#2b5cff' stroke-width='2'/>
<polyline points='498.9,315.5 499.9,311.6 500.9,308.7 501.9,306.8 502.9,306.9 503.9,306.9 504.9,306.1 505.9,306.4 506.9,305.9 507.5,298.0' fill='none' stroke='#2b5cff' stroke-width='2'/>
<polyline points='522.4,314.1 523.4,308.9 524.4,306.9 525.4,305.6 526.4,305.8 527.4,305.5 528.4,304.2 529.4,305.0 530.4,305.2 530.5,298.0' fill='none' stroke='#2b5cff' stroke-width='2'/>
<polyline points='545.9,312.7 546.9,308.1 547.9,305.5 548.9,304.3 549.9,303.8 550.9,303.5 551.9,302.9 552.9,304.0 553.9,302.7 554.5,298.0' fill='none' stroke='#2b5cff' stroke-width='2'/>
<polyline points='569.3,311.2 570.3,307.4 571.3,303.9 572.3,304.0 573.3,302.3 574.3,302.1 575.3,302.4 576.3,301.9 577.3,301.8 577.5,298.0' fill='none' stroke='#2b5cff' stroke-width='2'/>
<polyline points='592.8,311.1 593.8,307.3 594.8,305.2 595.8,302.7 596.8,302.3 597.8,302.8 598.8,302.6 599.8,302.5 600.8,301.3 601.5,298.0' fill='none' stroke='#2b5cff' stroke-width='2'/>
<polyline points='616.2,311.0 617.2,306.8 618.2,305.2 619.2,303.1 620.2,302.1 621.2,302.9 622.2,301.7 623.2,302.0 624.2,301.4 624.5,298.0' fill='none' stroke='#2b5cff' stroke-width='2'/>
<polyline points='639.6,311.0 640.6,307.1 641.6,304.4 642.6,303.4 643.6,302.6 644.6,301.9 645.6,301.8 646.6,302.1 647.6,301.6 648.5,298.0' fill='none' stroke='#2b5cff' stroke-width='2'/>
<polyline points='663.1,311.2 664.1,306.1 665.1,304.3 666.1,303.1 667.1,302.3 668.1,302.8 669.1,301.8 670.1,301.8 671.1,302.4 671.5,298.0' fill='none' stroke='#2b5cff' stroke-width='2'/>
<polyline points='686.5,311.0 687.5,306.5 688.5,304.0 689.5,303.8 690.5,302.9 691.5,302.4 692.5,302.1 693.5,301.3 694.5,301.5 695.5,298.0' fill='none' stroke='#2b5cff' stroke-width='2'/>
<polyline points='710.0,310.3 711.0,307.2 712.0,304.2 713.0,302.9 714.0,302.1 715.0,301.8 716.0,302.0 717.0,302.2 718.0,302.1 718.5,298.0' fill='none' stroke='#2b5cff' stroke-width='2'/>
<polyline points='733.5,310.3 734.5,306.9 735.5,304.8 736.5,303.2 737.5,302.1 738.5,302.2 739.5,302.4 740.5,302.4 741.5,302.3 741.5,298.0' fill='none' stroke='#2b5cff' stroke-width='2'/>
<polyline points='756.9,310.7 757.9,306.1 758.9,305.2 759.9,302.8 760.9,303.2 761.9,303.0 762.9,301.5 763.9,301.7 764.9,302.4 765.5,298.0' fill='none' stroke='#2b5cff' stroke-width='2'/>
<polyline points='780.3,311.4 781.3,306.4 782.3,304.7 783.3,303.7 784.3,302.3 785.3,301.8 786.3,302.7 787.3,301.8 788.3,301.5 788.5,298.0' fill='none' stroke='#2b5cff' stroke-width='2'/>
<polyline points='803.8,311.3 804.8,306.5 805.8,304.3 806.8,303.6 807.8,302.2 808.8,301.9 809.8,302.5 810.8,301.7 811.8,302.1 812.5,298.0' fill='none' stroke='#2b5cff' stroke-width='2'/>
<polyline points='827.2,311.1 828.2,307.2 829.2,304.5 830.2,303.9 831.2,303.1 832.2,302.8 833.2,301.8 834.2,301.7 835.2,301.8 835.5,298.0' fill='none' stroke='#2b5cff' stroke-width='2'/>
<polyline points='850.7,311.1 851.7,306.8 852.7,305.2 853.7,303.5 854.7,302.5 855.7,302.1 856.7,302.2 857.7,301.7 858.7,301.9 859.5,298.0' fill='none' stroke='#2b5cff' stroke-width='2'/>
<polyline points='874.1,310.2 875.1,306.6 876.1,305.2 877.1,303.7 878.1,302.7 879.1,302.5 880.1,302.8 881.1,301.3 882.1,301.4 882.5,298.0' fill='none' stroke='#2b5cff' stroke-width='2'/>
<polyline points='897.6,311.1 898.6,306.3 899.6,304.9 900.6,303.7 901.6,302.2 902.6,302.6 903.6,302.0 904.6,301.4 905.6,301.5 906.5,298.0' fill='none' stroke='#2b5cff' stroke-width='2'/>
<polyline points='921.0,311.1 922.0,307.0 923.0,303.9 924.0,303.8 925.0,302.3 926.0,301.9 927.0,301.7 928.0,301.7 929.0,302.0 929.5,298.0' fill='none' stroke='#2b5cff' stroke-width='2'/>
<polyline points='944.5,310.8 945.5,307.0 946.5,304.4 947.5,303.9 948.5,303.0 949.5,302.5 950.5,301.5 951.5,302.4 952.5,302.4 952.5,298.0' fill='none' stroke='#2b5cff' stroke-width='2'/>
<polyline points='968.0,310.8 969.0,307.4 970.0,305.0 971.0,303.4 972.0,303.0 973.0,302.6 974.0,301.4 975.0,301.4 976.0,302.4 976.5,298.0' fill='none' stroke='#2b5cff' stroke-width='2'/>
<polyline points='991.4,311.5 992.4,307.0 993.4,304.4 994.4,303.7 995.4,302.5 996.4,302.1 997.4,302.6 998.4,302.0 999.4,302.4 999.5,298.0' fill='none' stroke='#2b5cff' stroke-width='2'/>
<polyline points='1014.9,310.3 1015.9,307.1 1016.9,305.1 1017.9,303.7 1018.9,303.0 1019.9,301.8 1020.9,302.5 1021.9,302.3 1022.9,302.2 1023.5,298.0' fill='none' stroke='#2b5cff' stroke-width='2'/>
<polyline points='1038.3,311.3 1039.3,307.1 1040.3,305.1 1041.3,302.8 1042.3,302.5 1043.3,302.7 1044.3,301.4 1045.3,302.3 1046.3,302.2 1046.5,298.0' fill='none' stroke='#2b5cff' stroke-width='2'/>
<polyline points='1061.8,311.0 1062.8,306.4 1063.8,305.0 1064.8,302.7 1065.8,302.2 1066.8,302.9 1067.8,302.0 1068.8,302.3 1069.8,301.6 1070.5,298.0' fill='none' stroke='#2b5cff' stroke-width='2'/>
<polyline points='1085.2,311.3 1086.2,307.0 1087.2,303.9 1088.2,303.9 1089.2,302.9 1090.2,302.5 1091.2,301.6 1092.2,302.6 1093.2,302.1 1093.5,298.0' fill='none' stroke='#2b5cff' stroke-width='2'/>
<polyline points='1108.7,311.0 1109.7,307.0 1110.7,304.4 1111.7,303.9 1112.7,302.0 1113.7,302.5 1114.7,302.3 1115.7,301.9 1116.7,301.8 1117.5,298.0' fill='none' stroke='#2b5cff' stroke-width='2'/>
<polyline points='1132.1,311.4 1133.1,306.4 1134.1,305.1 1135.1,302.9 1136.1,302.3 1137.1,302.1 1138.1,302.3 1139.1,302.3 1140.1,301.8 1140.5,298.0' fill='none' stroke='#2b5cff' stroke-width='2'/>
<polyline points='1152.0,307.8 1153.0,308.4 1154.0,306.2 1155.0,306.2 1156.0,303.4 1157.0,304.5 1158.0,303.1 1159.0,304.4 1160.0,304.6 1161.0,304.6 1162.0,304.6 1163.0,305.0 1164.0,306.8 1165.0,307.3 1166.0,306.5 1167.0,306.4 1168.0,307.6 1169.0,306.9 1170.0,307.7 1171.0,307.6 1172.0,309.3 1173.0,309.0 1174.0,309.6 1175.0,310.1 1176.0,308.7 1177.0,310.1 1178.0,309.5 1179.0,309.6 1180.0,310.2 1181.0,310.4 1182.0,311.0 1183.0,310.8 1184.0,309.5 1185.0,310.3 1186.0,310.6 1187.0,309.0 1188.0,308.7 1189.0,308.4 1190.0,309.7 1191.0,309.8 1192.0,308.1 1193.0,308.9 1194.0,308.4 1195.0,306.9 1196.0,306.9 1197.0,308.5 1198.0,306.7 1199.0,307.2 1200.0,306.7 1201.0,307.2 1202.0,306.3 1203.0,307.1 1204.0,306.8 1205.0,306.9 1206.0,307.6 1207.0,308.4 1208.0,307.7 1209.0,309.0 1210.0,307.1 1211.0,308.5 1212.0,307.2 1213.0,309.4 1214.0,308.4 1215.0,308.4 1216.0,309.9 1217.0,309.5 1218.0,309.8 1222.0,313.0 1224.5,321.6 1227.0,345.0 1230.0,385.0 1232.0,410.0 1233.8,452.5 1237.0,540.0 1239.0,577.0 1240.7,589.0 1242.5,575.0 1244.0,552.0 1245.3,541.0 1246.5,543.0 1247.5,550.0' fill='none' stroke='#2b5cff' stroke-width='2'/>
<path d='M460.5 299.2V302.9 M461.5 295.2V301.8 M462.5 295.1V302.9 M463.5 299.9V304.6 M464.5 302.3V306.8 M465.5 292.4V305.5 M466.5 292.0V304.0 M467.5 302.5V304.5 M468.5 301.7V306.6 M469.5 293.8V305.3 M470.5 293.5V300.4 M471.5 291.5V302.9 M472.5 301.2V301.9 M473.5 305.9V303.7 M474.5 301.5V301.5 M483.5 293.3V301.0 M484.5 288.7V300.1 M485.5 290.1V300.7 M486.5 301.8V302.4 M487.5 301.9V301.2 M488.5 293.3V304.7 M489.5 293.6V301.4 M490.5 293.1V303.1 M491.5 297.7V301.6 M492.5 296.1V303.3 M493.5 299.6V303.8 M494.5 293.6V303.3 M495.5 293.6V302.6 M496.5 296.2V304.5 M497.5 300.5V304.8 M507.5 286.9V306.5 M508.5 290.5V306.4 M509.5 297.8V304.9 M510.5 294.5V304.7 M511.5 286.4V301.3 M512.5 291.3V304.6 M513.5 290.5V303.9 M514.5 296.2V302.2 M515.5 300.3V300.4 M516.5 293.8V305.7 M517.5 288.5V300.1 M518.5 291.4V306.9 M519.5 293.6V304.5 M520.5 292.9V300.0 M521.5 300.5V300.6 M530.5 286.4V302.0 M531.5 287.2V305.8 M532.5 288.9V305.8 M533.5 293.4V306.2 M534.5 294.8V306.3 M535.5 283.0V301.8 M536.5 287.9V306.2 M537.5 287.9V306.1 M538.5 296.8V305.6 M539.5 292.8V300.6 M540.5 291.6V305.3 M541.5 286.6V304.7 M542.5 284.5V305.3 M543.5 283.5V305.6 M544.5 294.6V306.3 M554.5 293.0V304.9 M555.5 288.4V306.0 M556.5 287.2V300.6 M557.5 290.7V306.4 M558.5 296.8V302.6 M559.5 291.4V306.6 M560.5 286.3V300.2 M561.5 286.1V305.2 M562.5 290.8V302.2 M563.5 296.0V304.1 M564.5 285.8V302.6 M565.5 285.3V303.1 M566.5 288.4V303.3 M567.5 291.3V305.8 M568.5 293.0V305.2 M577.5 297.8V303.0 M578.5 284.4V302.7 M579.5 288.0V306.8 M580.5 293.5V303.6 M581.5 296.3V306.6 M582.5 283.2V302.9 M583.5 288.1V303.7 M584.5 294.8V305.8 M585.5 296.1V301.2 M586.5 286.8V301.3 M587.5 287.2V303.6 M588.5 286.1V302.4 M589.5 297.6V300.6 M590.5 291.1V304.7 M591.5 297.9V300.3 M601.5 293.9V303.5 M602.5 285.4V301.0 M603.5 283.9V304.0 M604.5 296.6V306.6 M605.5 296.7V303.7 M606.5 296.2V302.4 M607.5 285.6V306.9 M608.5 287.9V305.9 M609.5 297.7V306.5 M610.5 295.1V302.6 M611.5 293.5V303.5 M612.5 288.8V305.4 M613.5 287.9V306.2 M614.5 295.1V301.9 M615.5 294.3V306.5 M624.5 297.8V302.8 M625.5 288.7V302.3 M626.5 288.3V301.5 M627.5 286.3V304.2 M628.5 294.1V305.8 M629.5 294.2V306.9 M630.5 293.3V304.7 M631.5 286.7V301.9 M632.5 288.1V306.5 M633.5 295.0V304.4 M634.5 290.8V302.9 M635.5 285.4V307.0 M636.5 284.7V304.3 M637.5 287.2V302.0 M638.5 294.2V304.2 M648.5 285.9V303.1 M649.5 285.1V303.7 M650.5 292.5V306.8 M651.5 290.9V306.3 M652.5 288.9V306.2 M653.5 284.7V303.6 M654.5 284.1V304.4 M655.5 297.9V304.5 M656.5 296.3V302.1 M657.5 292.4V305.9 M658.5 284.2V303.5 M659.5 286.9V303.7 M660.5 285.5V300.9 M661.5 290.9V300.7 M662.5 296.6V304.3 M671.5 287.8V301.7 M672.5 284.1V306.8 M673.5 290.9V303.7 M674.5 290.5V300.9 M675.5 292.0V301.3 M676.5 283.2V304.6 M677.5 287.2V300.6 M678.5 291.0V303.1 M679.5 291.3V302.5 M680.5 297.7V301.5 M681.5 284.4V303.2 M682.5 284.6V306.3 M683.5 284.5V304.3 M684.5 291.0V303.6 M685.5 296.2V302.7 M695.5 284.3V304.7 M696.5 285.6V305.3 M697.5 286.3V304.4 M698.5 291.8V303.5 M699.5 295.4V304.0 M700.5 296.1V304.6 M701.5 286.5V304.9 M702.5 283.2V302.2 M703.5 297.3V302.9 M704.5 294.9V301.5 M705.5 288.7V303.1 M706.5 287.1V305.9 M707.5 287.1V301.4 M708.5 296.2V303.4 M709.5 296.6V303.9 M718.5 293.6V300.8 M719.5 285.2V301.2 M720.5 289.0V305.3 M721.5 288.9V303.9 M722.5 293.5V301.3 M723.5 297.4V304.5 M724.5 286.9V301.8 M725.5 283.2V305.4 M726.5 291.5V304.5 M727.5 291.3V305.5 M728.5 285.0V301.3 M729.5 285.2V303.9 M730.5 284.4V300.3 M731.5 296.6V304.9 M732.5 294.0V303.5 M741.5 295.3V304.0 M742.5 286.9V301.0 M743.5 286.8V305.9 M744.5 287.1V301.0 M745.5 297.5V302.5 M746.5 292.1V301.6 M747.5 296.0V301.5 M748.5 284.1V304.7 M749.5 285.7V303.8 M750.5 297.3V304.0 M751.5 296.4V300.9 M752.5 296.7V306.6 M753.5 286.1V303.2 M754.5 288.8V301.3 M755.5 293.0V304.3 M765.5 291.2V306.5 M766.5 288.0V304.1 M767.5 287.6V301.9 M768.5 298.0V303.4 M769.5 296.7V300.5 M770.5 294.8V305.9 M771.5 285.7V301.6 M772.5 285.2V303.7 M773.5 295.0V301.5 M774.5 292.7V303.3 M775.5 285.0V303.4 M776.5 288.3V304.3 M777.5 283.9V302.7 M778.5 292.9V304.0 M779.5 295.6V306.4 M788.5 294.6V304.6 M789.5 284.1V306.5 M790.5 285.1V303.3 M791.5 287.3V306.5 M792.5 291.4V306.3 M793.5 295.0V301.7 M794.5 293.6V306.2 M795.5 283.6V301.7 M796.5 283.3V300.5 M797.5 295.8V300.0 M798.5 290.1V302.3 M799.5 288.2V300.2 M800.5 287.8V301.2 M801.5 290.7V304.3 M802.5 293.2V306.6 M812.5 287.4V306.3 M813.5 287.7V303.7 M814.5 285.6V306.0 M815.5 297.2V302.7 M816.5 290.2V304.6 M817.5 288.5V304.7 M818.5 285.3V306.3 M819.5 296.9V300.2 M820.5 291.9V302.5 M821.5 284.7V306.2 M822.5 287.7V303.3 M823.5 297.6V301.0 M824.5 290.0V306.1 M825.5 286.7V306.7 M826.5 287.7V306.0 M835.5 287.4V303.5 M836.5 286.0V306.4 M837.5 297.7V306.2 M838.5 291.4V301.9 M839.5 286.1V302.9 M840.5 283.1V304.8 M841.5 286.3V304.8 M842.5 295.7V302.8 M843.5 297.8V302.7 M844.5 283.9V307.0 M845.5 288.6V301.8 M846.5 284.4V301.4 M847.5 296.3V306.4 M848.5 292.6V304.5 M849.5 288.8V300.0 M859.5 285.3V302.6 M860.5 284.8V304.6 M861.5 293.6V300.8 M862.5 291.4V303.6 M863.5 293.9V304.6 M864.5 287.8V301.8 M865.5 284.6V304.1 M866.5 288.5V301.8 M867.5 294.2V303.5 M868.5 297.7V302.0 M869.5 295.7V302.6 M870.5 288.8V303.0 M871.5 284.4V305.9 M872.5 288.9V306.0 M873.5 291.6V306.0 M882.5 293.3V300.4 M883.5 284.1V306.9 M884.5 286.1V300.6 M885.5 292.4V302.8 M886.5 292.5V301.7 M887.5 286.2V302.1 M888.5 286.9V306.5 M889.5 283.8V306.5 M890.5 295.7V304.6 M891.5 290.5V306.7 M892.5 291.8V303.1 M893.5 288.8V304.3 M894.5 284.2V301.4 M895.5 291.0V301.0 M896.5 294.0V300.1 M906.5 291.6V301.0 M907.5 285.4V300.3 M908.5 284.3V304.6 M909.5 293.9V300.1 M910.5 297.3V301.4 M911.5 294.7V305.3 M912.5 287.6V305.4 M913.5 284.8V304.1 M914.5 284.2V301.1 M915.5 292.8V303.4 M916.5 290.9V305.8 M917.5 285.7V305.2 M918.5 285.4V300.3 M919.5 285.5V304.9 M920.5 290.6V305.1 M929.5 286.4V300.8 M930.5 284.5V305.4 M931.5 296.6V300.5 M932.5 291.7V305.4 M933.5 283.5V305.3 M934.5 284.9V306.5 M935.5 287.7V301.0 M936.5 296.4V305.4 M937.5 295.5V305.0 M938.5 288.3V300.3 M939.5 283.4V304.2 M940.5 283.3V302.6 M941.5 297.8V304.1 M942.5 296.2V303.5 M943.5 292.4V300.4 M952.5 291.7V302.5 M953.5 284.8V300.6 M954.5 285.7V304.6 M955.5 295.5V300.3 M956.5 292.2V306.7 M957.5 288.3V304.3 M958.5 286.0V306.7 M959.5 284.1V305.8 M960.5 290.0V301.2 M961.5 296.5V301.8 M962.5 294.4V306.0 M963.5 288.6V306.3 M964.5 286.7V303.1 M965.5 287.0V304.4 M966.5 295.4V306.4 M976.5 291.3V305.2 M977.5 283.3V302.1 M978.5 288.8V301.3 M979.5 291.6V302.2 M980.5 292.1V302.8 M981.5 292.1V301.4 M982.5 288.0V304.5 M983.5 283.9V305.3 M984.5 295.4V305.3 M985.5 297.3V303.7 M986.5 292.1V305.4 M987.5 286.4V302.5 M988.5 284.5V300.5 M989.5 295.4V302.9 M990.5 292.5V304.5 M999.5 292.9V304.0 M1000.5 283.1V303.6 M1001.5 284.3V303.2 M1002.5 294.0V306.8 M1003.5 290.3V303.8 M1004.5 292.4V306.6 M1005.5 284.4V303.9 M1006.5 288.8V304.0 M1007.5 284.0V305.7 M1008.5 297.6V301.9 M1009.5 293.1V306.7 M1010.5 288.3V300.4 M1011.5 286.9V301.8 M1012.5 285.6V306.8 M1013.5 291.5V304.3 M1023.5 293.9V300.6 M1024.5 288.4V306.8 M1025.5 284.5V302.7 M1026.5 297.5V301.4 M1027.5 294.2V305.4 M1028.5 297.2V303.1 M1029.5 287.4V303.7 M1030.5 288.8V300.6 M1031.5 294.6V306.4 M1032.5 294.5V303.2 M1033.5 290.1V301.4 M1034.5 283.6V306.1 M1035.5 286.4V306.4 M1036.5 296.1V304.0 M1037.5 291.4V304.6 M1046.5 286.9V300.6 M1047.5 287.8V303.8 M1048.5 294.9V303.2 M1049.5 291.7V301.3 M1050.5 284.3V305.0 M1051.5 288.9V304.3 M1052.5 295.4V300.6 M1053.5 297.9V300.6 M1054.5 284.8V303.5 M1055.5 284.2V300.6 M1056.5 287.6V301.5 M1057.5 297.4V304.0 M1058.5 296.0V300.6 M1059.5 287.4V304.7 M1060.5 287.8V300.4 M1070.5 294.3V306.6 M1071.5 287.1V306.8 M1072.5 284.7V306.3 M1073.5 287.3V306.9 M1074.5 295.5V304.8 M1075.5 292.0V301.8 M1076.5 284.3V301.8 M1077.5 286.5V304.6 M1078.5 292.4V300.4 M1079.5 292.9V301.0 M1080.5 297.8V304.8 M1081.5 284.1V300.7 M1082.5 287.1V303.1 M1083.5 297.5V302.4 M1084.5 296.6V301.6 M1093.5 284.6V300.1 M1094.5 285.2V302.0 M1095.5 283.7V303.9 M1096.5 293.9V306.5 M1097.5 290.5V301.3 M1098.5 291.9V302.4 M1099.5 285.9V301.5 M1100.5 288.6V302.6 M1101.5 290.4V303.7 M1102.5 290.8V303.3 M1103.5 287.7V300.9 M1104.5 283.6V302.0 M1105.5 295.6V303.3 M1106.5 295.0V305.7 M1107.5 287.1V300.2 M1117.5 293.7V301.6 M1118.5 285.4V302.4 M1119.5 285.2V301.1 M1120.5 286.6V301.8 M1121.5 295.7V301.0 M1122.5 297.7V301.0 M1123.5 294.7V306.2 M1124.5 284.0V304.1 M1125.5 288.3V304.6 M1126.5 292.2V306.6 M1127.5 297.3V300.7 M1128.5 284.7V306.8 M1129.5 286.2V305.9 M1130.5 294.1V300.8 M1131.5 294.7V305.6 M1140.5 284.3V301.5 M1141.5 283.8V302.8 M1142.5 286.5V306.6 M1143.5 295.6V303.1 M1144.5 290.1V304.7 M1145.5 297.7V305.4 M1146.5 286.8V304.9 M1147.5 287.6V302.1 M1148.5 286.6V305.9 M1149.5 291.6V300.1 M1150.5 292.2V300.5' stroke='#2b5cff' stroke-width='1.8' fill='none'/>
<polyline points='78.5,578.5 79.5,579.2 80.5,578.6 81.5,577.0 82.5,576.6 83.5,576.5 84.5,577.3 85.5,576.2 86.5,577.5 87.5,577.1 88.5,578.0 89.5,577.4 90.5,575.0 91.5,575.3 92.5,574.7 93.5,575.8 94.5,575.3 95.5,573.6 96.5,575.2 97.5,573.9 98.5,574.0 99.5,574.8 100.5,572.9 101.5,573.5 102.5,573.9 103.5,574.4 104.5,572.5 105.5,571.4 106.5,570.9 107.5,572.8 108.5,572.9 109.5,572.1 110.5,571.5 111.5,572.1 112.5,570.7 113.5,569.2 114.5,570.8 115.5,571.1 116.5,569.5 117.5,568.2 118.5,568.4 119.5,567.8 121.0,567.0 122.0,563.0 124.5,525.0 128.0,460.0 131.0,395.0 133.7,346.0 136.0,341.5 139.5,339.0 140.5,322.0 142.5,320.0 143.5,323.0 144.0,324.0 145.0,324.0 146.0,324.0 147.0,323.0 148.0,324.0 149.0,321.0 150.0,322.0 151.0,322.0 152.0,324.0 153.0,323.0 154.0,324.0 155.0,321.0 156.0,321.0 157.0,323.0 158.0,323.0 159.0,323.0 160.0,323.0 161.0,325.0 162.0,324.0 163.0,324.0 164.0,324.0 165.0,324.0 166.0,324.0 167.0,324.0 168.0,324.0 169.0,324.0 170.0,324.0 171.0,324.0 172.0,324.0 173.0,325.0 174.0,324.0 175.0,323.0 176.0,322.0 177.0,323.0 178.0,324.0 179.0,323.0 180.0,324.0 181.0,322.0 182.0,323.0 183.0,323.0 184.0,323.0 185.0,322.0 186.0,323.0 187.0,325.0 188.0,324.0 189.0,322.0 190.0,323.0 191.0,322.0 192.0,322.0 193.0,322.0 194.0,323.0 195.0,321.0 196.0,323.0 197.0,324.0 198.0,324.0 199.0,325.0 200.0,323.0 201.0,324.0 202.0,324.0 203.0,321.0 204.0,322.0 205.0,323.0 206.0,325.0 207.0,322.0 208.0,324.0 209.0,324.0 210.0,325.0 211.0,325.0 212.0,323.0 213.0,323.0 214.0,324.0 215.0,323.0 216.0,323.0 217.0,323.0 218.0,324.0 219.0,324.0 220.0,323.0 221.0,322.0 222.0,322.0 223.0,324.0 224.0,325.0 225.0,324.0 226.0,324.0 227.0,324.0 228.0,321.0 229.0,322.0 230.0,323.0 231.0,323.0 232.0,322.0 233.0,323.0 234.0,323.0 235.0,325.0 236.0,323.0 237.0,322.0 238.0,321.0 239.0,323.0 240.0,324.0 241.0,323.0 242.0,323.0 243.0,323.0 244.0,324.0 245.0,323.0 246.0,322.0 247.0,323.0 248.0,323.0 249.0,324.0 250.0,323.0 251.0,323.0 252.0,323.0 253.0,324.0 254.0,324.0 255.0,324.0 256.0,324.0 257.0,323.0 258.0,324.0 259.0,324.0 260.0,325.0 261.0,325.0 262.0,323.0 263.0,323.0 264.0,324.0 265.0,323.0 266.0,322.0 267.0,322.0 268.0,323.0 269.0,323.0 270.0,323.0 271.0,323.0 272.0,323.0 273.0,323.0 274.0,322.0 275.0,322.0 276.0,323.0 277.0,321.0 278.0,322.0 279.0,323.0 280.0,322.0 281.0,323.0 282.0,324.0 283.0,324.0 284.0,323.0 285.0,324.0 286.0,324.0 287.0,324.0 288.0,322.0 289.0,323.0 290.0,323.0 291.0,323.0 292.0,323.0 293.0,323.0 294.0,323.0 295.0,324.0 296.0,322.0 297.0,322.0 298.0,322.0 299.0,323.0 300.0,324.0 301.0,323.0 302.0,323.0 303.0,322.0 304.0,323.0 305.0,324.0 306.0,323.0 307.0,324.0 308.0,323.0 309.0,323.0 310.0,323.0 311.0,322.0 312.0,323.0 313.0,323.0 314.0,322.0 315.0,323.0 316.0,323.0 317.0,324.0 318.0,321.0 319.0,323.0 320.0,323.0 321.0,322.0 322.0,323.0 323.0,323.0 324.0,323.0 325.0,323.0 326.0,324.0 327.0,325.0 328.0,324.0 329.0,323.0 330.0,323.0 331.0,323.0 332.0,323.0 333.0,324.0 334.0,321.0 335.0,323.0 336.0,321.0 337.0,323.0 338.0,324.0 339.0,324.0 340.0,323.0 341.0,323.0 342.0,323.0 343.0,323.0 344.0,323.0 345.0,323.0 346.0,323.0 347.0,322.0 348.0,322.0 349.0,324.0 350.0,321.0 351.0,321.0 352.0,320.0 353.0,321.0 354.0,321.0 355.0,321.0 356.0,323.0 357.0,325.0 358.0,324.0 359.0,323.0 360.0,322.0 361.0,322.0 362.0,323.0 363.0,324.0 364.0,323.0 365.0,322.0 366.0,322.0 367.0,323.0 368.0,323.0 369.0,322.0 370.0,323.0 371.0,323.0 372.0,322.0 373.0,323.0 374.0,322.0 375.0,321.0 376.0,322.0 377.0,322.0 378.0,323.0 379.0,323.0 380.0,323.0 381.0,322.0 382.0,323.0 383.0,323.0 384.0,325.0 385.0,323.0 386.0,322.0 387.0,322.0 388.0,321.0 389.0,322.0 390.0,322.0 391.0,323.0 392.0,323.0 393.0,323.0 394.0,322.0 395.0,322.0 396.0,323.0 397.0,324.0 398.0,322.0 399.0,322.0 400.0,322.0 401.0,323.0 402.0,323.0 403.0,323.0 404.0,324.0 405.0,324.0 406.0,323.0 407.0,323.0 408.0,322.0 409.0,321.0 410.0,322.0 411.0,322.0 412.0,322.0 413.0,323.0 414.0,322.0 415.0,321.0 416.0,321.0 417.0,322.0 418.0,322.0 419.0,320.0 420.0,321.0 421.0,323.0 422.0,323.0 423.0,324.0 424.0,323.0 425.0,322.0 426.0,322.0 427.0,320.0 428.0,321.0 429.0,323.0 430.0,323.0 431.0,322.0 432.0,322.0 433.0,323.0 434.0,323.0 435.0,323.0 436.0,322.0 437.0,322.0 438.0,323.0 439.0,322.0 440.0,322.0 441.0,322.0 442.0,321.0 443.0,321.0 444.0,321.0 445.0,321.0 446.0,322.0 447.0,327.1 448.0,320.1 449.0,328.1 450.0,319.3 451.0,327.5 452.0,316.7 453.0,328.9 454.0,313.0 455.0,328.6 456.0,317.0 457.0,335.4 458.0,311.6 459.0,331.0 460.0,315.3 460.5,318.0' fill='none' stroke='#ff0000' stroke-width='2'/>
<polyline points='475.5,333.9 476.5,327.4 477.5,323.9 478.5,322.5 479.5,321.0 480.5,320.7 481.5,319.6 482.5,319.2 483.5,319.4 483.5,318.0' fill='none' stroke='#ff0000' stroke-width='2'/>
<polyline points='498.9,333.3 499.9,327.3 500.9,324.3 501.9,322.2 502.9,320.6 503.9,320.0 504.9,319.9 505.9,319.3 506.9,319.5 507.5,318.0' fill='none' stroke='#ff0000' stroke-width='2'/>
<polyline points='522.4,333.0 523.4,327.6 524.4,324.1 525.4,321.2 526.4,321.1 527.4,320.5 528.4,320.1 529.4,319.7 530.4,319.3 530.5,318.0' fill='none' stroke='#ff0000' stroke-width='2'/>
<polyline points='545.9,333.5 546.9,327.4 547.9,323.4 548.9,322.2 549.9,320.9 550.9,320.3 551.9,319.3 552.9,319.5 553.9,319.8 554.5,318.0' fill='none' stroke='#ff0000' stroke-width='2'/>
<polyline points='569.3,334.1 570.3,327.1 571.3,323.2 572.3,321.6 573.3,320.3 574.3,320.0 575.3,319.5 576.3,320.3 577.3,319.1 577.5,318.0' fill='none' stroke='#ff0000' stroke-width='2'/>
<polyline points='592.8,333.6 593.8,327.0 594.8,324.4 595.8,321.7 596.8,321.3 597.8,320.6 598.8,320.0 599.8,319.4 600.8,319.9 601.5,318.0' fill='none' stroke='#ff0000' stroke-width='2'/>
<polyline points='616.2,333.2 617.2,327.2 618.2,323.5 619.2,322.1 620.2,320.9 621.2,320.2 622.2,319.9 623.2,319.2 624.2,319.1 624.5,318.0' fill='none' stroke='#ff0000' stroke-width='2'/>
<polyline points='639.6,332.8 640.6,327.9 641.6,323.5 642.6,322.3 643.6,320.6 644.6,320.7 645.6,320.6 646.6,319.4 647.6,320.3 648.5,318.0' fill='none' stroke='#ff0000' stroke-width='2'/>
<polyline points='663.1,332.9 664.1,327.6 665.1,324.1 666.1,321.4 667.1,320.3 668.1,320.3 669.1,319.8 670.1,319.1 671.1,319.7 671.5,318.0' fill='none' stroke='#ff0000' stroke-width='2'/>
<polyline points='686.5,333.6 687.5,327.1 688.5,323.3 689.5,321.6 690.5,320.3 691.5,320.0 692.5,319.6 693.5,319.5 694.5,319.1 695.5,318.0' fill='none' stroke='#ff0000' stroke-width='2'/>
<polyline points='710.0,333.0 711.0,326.9 712.0,324.4 713.0,321.7 714.0,321.0 715.0,320.5 716.0,319.9 717.0,319.0 718.0,319.1 718.5,318.0' fill='none' stroke='#ff0000' stroke-width='2'/>
<polyline points='733.5,333.2 734.5,326.7 735.5,323.3 736.5,322.5 737.5,320.2 738.5,319.8 739.5,319.2 740.5,320.2 741.5,319.5 741.5,318.0' fill='none' stroke='#ff0000' stroke-width='2'/>
<polyline points='756.9,332.9 757.9,327.5 758.9,323.7 759.9,321.4 760.9,320.2 761.9,319.8 762.9,320.2 763.9,319.5 764.9,320.0 765.5,318.0' fill='none' stroke='#ff0000' stroke-width='2'/>
<polyline points='780.3,332.9 781.3,327.1 782.3,323.2 783.3,322.3 784.3,321.2 785.3,319.6 786.3,319.7 787.3,320.2 788.3,320.1 788.5,318.0' fill='none' stroke='#ff0000' stroke-width='2'/>
<polyline points='803.8,332.8 804.8,327.5 805.8,323.7 806.8,322.3 807.8,320.1 808.8,320.3 809.8,319.7 810.8,319.5 811.8,320.1 812.5,318.0' fill='none' stroke='#ff0000' stroke-width='2'/>
<polyline points='827.2,332.9 828.2,327.2 829.2,323.3 830.2,322.1 831.2,320.3 832.2,319.7 833.2,319.9 834.2,320.1 835.2,319.5 835.5,318.0' fill='none' stroke='#ff0000' stroke-width='2'/>
<polyline points='850.7,334.0 851.7,327.4 852.7,323.4 853.7,322.2 854.7,321.1 855.7,320.3 856.7,320.2 857.7,319.9 858.7,319.2 859.5,318.0' fill='none' stroke='#ff0000' stroke-width='2'/>
<polyline points='874.1,333.4 875.1,327.1 876.1,324.0 877.1,321.3 878.1,321.4 879.1,320.1 880.1,319.4 881.1,319.6 882.1,320.0 882.5,318.0' fill='none' stroke='#ff0000' stroke-width='2'/>
<polyline points='897.6,333.8 898.6,326.9 899.6,324.1 900.6,321.9 901.6,321.2 902.6,320.2 903.6,319.5 904.6,319.1 905.6,320.1 906.5,318.0' fill='none' stroke='#ff0000' stroke-width='2'/>
<polyline points='921.0,333.3 922.0,326.7 923.0,324.0 924.0,321.6 925.0,320.3 926.0,319.7 927.0,320.0 928.0,319.4 929.0,319.0 929.5,318.0' fill='none' stroke='#ff0000' stroke-width='2'/>
<polyline points='944.5,333.9 945.5,326.8 946.5,324.0 947.5,321.9 948.5,320.9 949.5,320.4 950.5,320.3 951.5,320.1 952.5,319.3 952.5,318.0' fill='none' stroke='#ff0000' stroke-width='2'/>
<polyline points='968.0,333.3 969.0,326.6 970.0,324.0 971.0,321.8 972.0,321.4 973.0,320.6 974.0,319.7 975.0,320.4 976.0,319.1 976.5,318.0' fill='none' stroke='#ff0000' stroke-width='2'/>
<polyline points='991.4,333.7 992.4,327.6 993.4,324.4 994.4,321.7 995.4,321.2 996.4,319.8 997.4,319.9 998.4,320.0 999.4,319.1 999.5,318.0' fill='none' stroke='#ff0000' stroke-width='2'/>
<polyline points='1014.9,333.0 1015.9,326.7 1016.9,323.1 1017.9,322.3 1018.9,321.2 1019.9,320.6 1020.9,319.6 1021.9,319.1 1022.9,319.8 1023.5,318.0' fill='none' stroke='#ff0000' stroke-width='2'/>
<polyline points='1038.3,334.2 1039.3,327.2 1040.3,323.9 1041.3,321.9 1042.3,321.1 1043.3,320.8 1044.3,320.0 1045.3,319.3 1046.3,319.8 1046.5,318.0' fill='none' stroke='#ff0000' stroke-width='2'/>
<polyline points='1061.8,333.2 1062.8,326.7 1063.8,324.3 1064.8,321.7 1065.8,320.3 1066.8,320.4 1067.8,320.1 1068.8,320.1 1069.8,320.0 1070.5,318.0' fill='none' stroke='#ff0000' stroke-width='2'/>
<polyline points='1085.2,333.9 1086.2,326.9 1087.2,323.4 1088.2,321.4 1089.2,320.9 1090.2,319.8 1091.2,319.3 1092.2,319.6 1093.2,319.7 1093.5,318.0' fill='none' stroke='#ff0000' stroke-width='2'/>
<polyline points='1108.7,333.9 1109.7,326.7 1110.7,323.6 1111.7,321.6 1112.7,321.3 1113.7,320.4 1114.7,319.2 1115.7,320.0 1116.7,320.1 1117.5,318.0' fill='none' stroke='#ff0000' stroke-width='2'/>
<polyline points='1132.1,334.1 1133.1,326.7 1134.1,323.9 1135.1,322.1 1136.1,320.4 1137.1,320.3 1138.1,319.3 1139.1,319.9 1140.1,319.9 1140.5,318.0' fill='none' stroke='#ff0000' stroke-width='2'/>
<polyline points='1152.0,325.2 1153.0,324.3 1154.0,324.3 1155.0,325.5 1156.0,322.9 1157.0,324.4 1158.0,322.3 1159.0,321.7 1160.0,321.5 1161.0,320.0 1162.0,319.5 1163.0,320.6 1164.0,319.7 1165.0,320.8 1166.0,320.3 1167.0,321.3 1168.0,319.2 1169.0,320.8 1170.0,320.8 1171.0,321.0 1172.0,319.3 1173.0,319.6 1174.0,321.0 1175.0,319.7 1176.0,320.7 1177.0,319.4 1178.0,320.5 1179.0,320.6 1180.0,319.7 1181.0,320.4 1182.0,319.2 1183.0,319.6 1184.0,320.6 1185.0,320.6 1186.0,319.6 1187.0,320.7 1188.0,319.5 1189.0,321.1 1190.0,321.3 1191.0,321.7 1192.0,320.9 1193.0,320.6 1194.0,321.0 1195.0,322.4 1196.0,323.8 1197.0,323.1 1198.0,322.7 1199.0,324.0 1200.0,324.9 1201.0,325.5 1202.0,324.3 1203.0,325.7 1204.0,326.6 1205.0,326.2 1206.0,327.7 1207.0,327.3 1208.0,329.1 1209.0,328.9 1210.0,329.0 1211.0,329.1 1212.0,331.3 1213.0,329.7 1214.0,331.4 1215.0,330.6 1216.0,332.8 1217.0,331.7 1218.0,332.3 1220.0,335.0 1222.5,348.0 1225.0,372.0 1227.0,400.0 1228.5,430.0 1232.0,505.0 1234.8,556.0 1236.0,585.0 1237.3,594.0 1238.5,592.0 1240.0,575.0 1241.5,562.0 1243.0,560.0 1245.0,566.0 1246.5,571.0 1247.5,573.0' fill='none' stroke='#ff0000' stroke-width='2'/>
<path d='M460.5 305.7V326.7 M461.5 300.9V343.8 M462.5 298.7V341.0 M463.5 300.3V329.4 M464.5 309.4V324.5 M465.5 303.5V342.0 M466.5 301.8V341.7 M467.5 299.4V327.5 M468.5 309.8V325.7 M469.5 304.9V327.2 M470.5 296.9V346.8 M471.5 297.8V340.4 M472.5 298.7V327.3 M473.5 305.0V327.7 M474.5 305.0V344.8 M483.5 299.8V329.2 M484.5 299.8V343.0 M485.5 300.5V343.2 M486.5 302.9V323.1 M487.5 303.0V329.1 M488.5 300.1V326.5 M489.5 300.2V344.7 M490.5 299.0V341.8 M491.5 308.9V326.0 M492.5 302.9V325.4 M493.5 295.7V325.4 M494.5 300.0V336.1 M495.5 306.3V343.3 M496.5 305.2V329.6 M497.5 298.6V321.3 M507.5 295.2V321.1 M508.5 297.1V343.2 M509.5 297.1V342.8 M510.5 305.2V327.1 M511.5 304.1V327.9 M512.5 293.6V344.5 M513.5 295.6V345.0 M514.5 294.9V323.7 M515.5 303.8V326.8 M516.5 304.9V336.4 M517.5 296.9V346.1 M518.5 295.7V326.3 M519.5 296.3V324.7 M520.5 302.1V337.7 M521.5 305.9V337.3 M530.5 297.7V344.6 M531.5 292.4V346.7 M532.5 301.7V326.5 M533.5 303.8V323.8 M534.5 294.3V343.5 M535.5 296.8V339.1 M536.5 302.4V326.3 M537.5 299.3V328.5 M538.5 295.4V323.5 M539.5 296.1V346.1 M540.5 303.4V344.8 M541.5 306.5V323.1 M542.5 294.8V322.9 M543.5 296.7V325.1 M544.5 296.6V338.6 M554.5 292.2V336.4 M555.5 294.9V345.3 M556.5 304.1V329.3 M557.5 301.5V323.1 M558.5 295.0V338.0 M559.5 293.4V343.9 M560.5 306.5V321.5 M561.5 306.4V323.3 M562.5 296.6V325.4 M563.5 292.0V338.2 M564.5 294.6V343.2 M565.5 302.1V324.4 M566.5 305.5V329.2 M567.5 297.5V344.8 M568.5 292.5V342.8 M577.5 300.0V327.8 M578.5 293.6V338.6 M579.5 294.5V337.8 M580.5 292.9V326.8 M581.5 303.1V325.0 M582.5 301.3V324.2 M583.5 293.7V338.0 M584.5 293.4V337.9 M585.5 306.1V327.6 M586.5 300.1V327.0 M587.5 293.8V336.1 M588.5 297.0V346.1 M589.5 293.7V326.8 M590.5 302.3V327.9 M591.5 301.0V326.1 M601.5 299.4V337.4 M602.5 293.7V337.3 M603.5 295.6V328.7 M604.5 305.0V322.5 M605.5 302.1V324.8 M606.5 294.4V346.4 M607.5 293.4V339.7 M608.5 305.4V329.2 M609.5 299.4V325.7 M610.5 293.5V340.6 M611.5 295.2V336.8 M612.5 299.2V322.3 M613.5 306.5V326.7 M614.5 297.3V336.4 M615.5 296.1V339.0 M624.5 300.5V325.9 M625.5 297.5V337.8 M626.5 294.0V339.0 M627.5 292.3V321.2 M628.5 301.8V326.9 M629.5 301.8V327.9 M630.5 296.1V346.3 M631.5 292.8V338.2 M632.5 297.0V321.9 M633.5 307.0V323.4 M634.5 304.6V324.7 M635.5 295.3V337.3 M636.5 292.9V345.3 M637.5 299.9V328.7 M638.5 301.8V324.2 M648.5 297.3V329.7 M649.5 295.7V347.0 M650.5 305.5V337.9 M651.5 305.6V325.6 M652.5 296.1V328.4 M653.5 294.5V322.4 M654.5 295.0V338.1 M655.5 303.8V339.9 M656.5 299.3V324.7 M657.5 296.1V321.0 M658.5 295.5V327.0 M659.5 295.3V338.9 M660.5 307.0V342.3 M661.5 300.3V327.8 M662.5 293.0V325.7 M671.5 297.3V325.4 M672.5 293.0V339.9 M673.5 293.7V342.2 M674.5 302.1V324.6 M675.5 305.6V324.2 M676.5 293.7V323.1 M677.5 294.0V337.7 M678.5 301.2V345.2 M679.5 305.7V328.2 M680.5 296.3V324.4 M681.5 297.7V325.5 M682.5 300.0V343.8 M683.5 303.7V340.0 M684.5 293.3V328.9 M685.5 295.3V323.4 M695.5 301.2V342.7 M696.5 294.4V342.7 M697.5 292.9V327.6 M698.5 297.6V326.1 M699.5 303.2V329.3 M700.5 306.5V337.2 M701.5 297.4V345.6 M702.5 297.8V327.1 M703.5 296.7V324.1 M704.5 305.0V330.0 M705.5 303.2V339.8 M706.5 294.0V341.5 M707.5 295.8V325.6 M708.5 304.4V328.6 M709.5 300.5V329.6 M718.5 300.6V327.3 M719.5 293.9V341.2 M720.5 292.4V336.1 M721.5 292.5V327.5 M722.5 299.9V325.4 M723.5 303.3V336.1 M724.5 295.8V346.3 M725.5 293.5V322.2 M726.5 305.7V323.7 M727.5 305.8V329.3 M728.5 297.0V344.2 M729.5 297.0V339.5 M730.5 294.2V328.5 M731.5 303.5V326.7 M732.5 306.2V346.4 M741.5 304.8V339.6 M742.5 294.5V340.1 M743.5 297.2V325.8 M744.5 300.8V327.7 M745.5 303.6V326.0 M746.5 293.4V340.9 M747.5 297.8V338.2 M748.5 297.0V326.8 M749.5 304.7V323.0 M750.5 304.6V327.6 M751.5 297.1V343.5 M752.5 295.0V341.6 M753.5 304.0V329.6 M754.5 304.5V325.9 M755.5 294.9V337.0 M765.5 292.4V338.8 M766.5 297.2V343.4 M767.5 293.5V330.0 M768.5 302.6V321.2 M769.5 302.9V321.3 M770.5 295.7V343.1 M771.5 297.8V343.6 M772.5 306.7V325.7 M773.5 301.5V322.2 M774.5 296.9V344.0 M775.5 297.6V339.5 M776.5 293.4V323.2 M777.5 304.0V327.5 M778.5 299.5V329.9 M779.5 295.5V337.5 M788.5 304.8V338.8 M789.5 297.8V336.8 M790.5 295.5V323.7 M791.5 297.8V327.2 M792.5 305.7V323.9 M793.5 303.4V344.3 M794.5 292.1V336.5 M795.5 293.7V325.5 M796.5 292.3V322.2 M797.5 305.5V342.3 M798.5 301.2V343.1 M799.5 292.2V323.9 M800.5 294.9V326.5 M801.5 297.2V344.8 M802.5 305.2V346.9 M812.5 293.6V326.5 M813.5 297.2V345.4 M814.5 294.1V343.8 M815.5 300.7V329.2 M816.5 300.7V328.1 M817.5 292.1V344.9 M818.5 294.1V338.5 M819.5 294.3V326.9 M820.5 299.2V327.4 M821.5 301.6V340.7 M822.5 295.0V346.8 M823.5 297.6V327.9 M824.5 301.4V321.8 M825.5 301.0V339.5 M826.5 293.3V336.6 M835.5 304.5V337.6 M836.5 292.7V339.9 M837.5 294.1V322.9 M838.5 296.4V323.5 M839.5 299.6V336.5 M840.5 303.5V340.0 M841.5 295.9V325.9 M842.5 297.9V328.9 M843.5 293.9V324.8 M844.5 302.1V340.5 M845.5 299.0V342.7 M846.5 295.7V324.4 M847.5 292.7V328.6 M848.5 299.4V343.6 M849.5 303.4V339.5 M859.5 302.3V343.7 M860.5 296.0V341.7 M861.5 293.7V323.6 M862.5 295.8V327.6 M863.5 299.0V337.4 M864.5 304.0V341.8 M865.5 295.3V321.0 M866.5 293.8V325.9 M867.5 293.6V324.9 M868.5 299.7V337.4 M869.5 305.2V346.1 M870.5 292.3V327.8 M871.5 295.6V323.3 M872.5 300.0V342.8 M873.5 303.6V336.7 M882.5 297.1V337.5 M883.5 295.8V339.5 M884.5 300.5V325.8 M885.5 302.1V327.0 M886.5 297.3V343.5 M887.5 294.3V340.8 M888.5 292.8V322.9 M889.5 304.3V327.4 M890.5 301.7V341.0 M891.5 296.4V336.1 M892.5 296.9V321.3 M893.5 293.2V322.9 M894.5 302.2V327.6 M895.5 300.4V345.4 M896.5 297.3V345.0 M906.5 304.2V343.6 M907.5 293.1V339.7 M908.5 294.1V326.9 M909.5 295.1V321.7 M910.5 305.3V345.8 M911.5 301.2V339.3 M912.5 293.2V325.2 M913.5 297.4V326.2 M914.5 299.8V321.0 M915.5 301.4V337.9 M916.5 294.0V340.0 M917.5 296.9V327.5 M918.5 299.9V322.5 M919.5 299.3V342.4 M920.5 294.5V345.2 M929.5 304.0V337.2 M930.5 296.0V338.4 M931.5 295.1V328.4 M932.5 294.0V321.9 M933.5 300.4V339.3 M934.5 303.7V338.0 M935.5 296.7V321.3 M936.5 295.1V322.5 M937.5 293.2V346.2 M938.5 299.5V336.0 M939.5 303.2V324.0 M940.5 292.4V328.8 M941.5 294.5V326.9 M942.5 305.4V341.4 M943.5 301.1V343.6 M952.5 302.7V339.7 M953.5 297.1V342.8 M954.5 293.6V327.3 M955.5 305.5V322.1 M956.5 305.6V322.7 M957.5 294.2V338.5 M958.5 297.4V340.3 M959.5 303.1V329.9 M960.5 300.3V325.7 M961.5 297.7V325.1 M962.5 294.1V337.1 M963.5 295.1V340.1 M964.5 304.3V321.7 M965.5 306.7V324.3 M966.5 294.3V325.7 M976.5 295.1V328.9 M977.5 293.0V339.4 M978.5 294.3V346.6 M979.5 301.5V329.5 M980.5 302.5V322.0 M981.5 294.3V346.6 M982.5 297.5V341.0 M983.5 296.7V323.8 M984.5 302.8V326.0 M985.5 301.2V324.3 M986.5 293.7V342.9 M987.5 292.2V345.1 M988.5 297.6V323.4 M989.5 303.4V327.8 M990.5 305.5V322.0 M999.5 306.2V323.8 M1000.5 297.3V336.9 M1001.5 292.7V346.5 M1002.5 305.1V325.0 M1003.5 303.7V326.4 M1004.5 294.8V341.3 M1005.5 297.8V341.8 M1006.5 305.6V323.5 M1007.5 304.7V323.0 M1008.5 293.6V340.1 M1009.5 292.5V337.2 M1010.5 302.3V327.0 M1011.5 302.0V325.8 M1012.5 295.9V326.2 M1013.5 297.3V342.8 M1023.5 294.2V329.0 M1024.5 294.0V339.5 M1025.5 305.8V341.8 M1026.5 301.8V326.9 M1027.5 293.7V328.3 M1028.5 296.4V322.4 M1029.5 300.1V337.2 M1030.5 299.2V344.9 M1031.5 296.7V322.8 M1032.5 297.2V324.0 M1033.5 305.2V345.9 M1034.5 301.8V345.7 M1035.5 297.7V325.0 M1036.5 296.1V329.2 M1037.5 296.3V328.8 M1046.5 292.4V336.3 M1047.5 295.4V342.7 M1048.5 304.6V327.0 M1049.5 304.4V326.0 M1050.5 295.0V328.5 M1051.5 296.4V343.4 M1052.5 299.7V341.7 M1053.5 300.9V328.9 M1054.5 293.6V323.8 M1055.5 295.5V339.7 M1056.5 292.3V343.5 M1057.5 302.1V329.9 M1058.5 300.7V327.8 M1059.5 292.1V321.5 M1060.5 292.8V346.0 M1070.5 295.2V343.1 M1071.5 294.4V346.1 M1072.5 292.5V322.9 M1073.5 299.1V323.3 M1074.5 300.4V324.9 M1075.5 296.5V344.3 M1076.5 292.2V343.6 M1077.5 297.8V326.8 M1078.5 303.8V327.3 M1079.5 299.5V336.2 M1080.5 292.7V341.4 M1081.5 293.6V327.9 M1082.5 293.8V324.7 M1083.5 304.8V337.0 M1084.5 305.7V336.3 M1093.5 293.4V345.8 M1094.5 292.6V340.2 M1095.5 302.8V325.4 M1096.5 302.9V324.6 M1097.5 297.5V324.8 M1098.5 293.6V340.9 M1099.5 292.3V341.6 M1100.5 303.9V330.0 M1101.5 299.5V324.9 M1102.5 295.1V323.8 M1103.5 294.8V346.4 M1104.5 296.8V342.9 M1105.5 305.3V321.6 M1106.5 301.1V325.6 M1107.5 297.4V343.1 M1117.5 300.6V347.0 M1118.5 297.8V339.5 M1119.5 296.0V321.2 M1120.5 297.0V321.0 M1121.5 302.6V342.2 M1122.5 300.9V337.3 M1123.5 292.8V325.7 M1124.5 292.3V323.1 M1125.5 302.6V340.5 M1126.5 305.9V346.5 M1127.5 294.4V321.5 M1128.5 292.1V323.6 M1129.5 297.2V324.8 M1130.5 305.5V343.2 M1131.5 300.9V343.2 M1140.5 296.6V337.4 M1141.5 293.6V336.4 M1142.5 294.5V321.7 M1143.5 303.6V324.2 M1144.5 300.4V341.3 M1145.5 293.0V340.1 M1146.5 297.0V326.8 M1147.5 297.8V322.8 M1148.5 301.0V328.4 M1149.5 306.0V342.5 M1150.5 295.2V344.0' stroke='#ff0000' stroke-width='1.8' fill='none'/>
</svg>
<!-- y title -->
<div class="t" style="left:17px;top:322px;width:115px;height:16px;font-weight:bold;font-size:16px;color:#2b2f4c;transform-origin:0 0;transform:rotate(-90deg) scaleX(1.125);">Camino [mm]</div>
<!-- toolbar -->
<div class="a" style="left:50px;top:659px;width:40px;height:39px;background:#f6f6f6;border:1px solid #c8c8c8"></div>
<div class="a" style="left:168px;top:659px;width:1px;height:39px;background:#d0d0d0"></div>
<!-- buttons -->
<div class="a" style="left:40px;top:704px;width:175px;height:32px;background:linear-gradient(#7b7c88,#5c5d6a 45%,#545563);border:1px solid #3c3e4e;border-radius:3px"></div>
<div class="a" style="left:217px;top:704px;width:174px;height:32px;background:linear-gradient(#7b7c88,#5c5d6a 45%,#545563);border:1px solid #3c3e4e;border-radius:3px"></div>
<div class="a" style="left:393px;top:704px;width:175px;height:32px;background:linear-gradient(#7b7c88,#5c5d6a 45%,#545563);border:1px solid #3c3e4e;border-radius:3px"></div>
<!-- nav -->
<div class="a" style="left:0;top:740px;width:1279px;height:59px;background:#b2b2b6"></div>
<div class="a" style="left:1px;top:740px;width:78px;height:57px;background:linear-gradient(#efefef,#e6e6e6 40%,#dcdcdc);border:1px solid #a4a4ae;border-radius:3px"></div><div class="a" style="left:82px;top:740px;width:77px;height:57px;background:linear-gradient(#efefef,#e6e6e6 40%,#dcdcdc);border:1px solid #a4a4ae;border-radius:3px"></div><div class="a" style="left:161px;top:740px;width:77px;height:57px;background:linear-gradient(#efefef,#e6e6e6 40%,#dcdcdc);border:1px solid #a4a4ae;border-radius:3px"></div><div class="a" style="left:241px;top:740px;width:77px;height:57px;background:linear-gradient(#efefef,#e6e6e6 40%,#dcdcdc);border:1px solid #a4a4ae;border-radius:3px"></div><div class="a" style="left:321px;top:740px;width:77px;height:57px;background:linear-gradient(#efefef,#e6e6e6 40%,#dcdcdc);border:1px solid #a4a4ae;border-radius:3px"></div><div class="a" style="left:401px;top:740px;width:77px;height:57px;background:linear-gradient(#efefef,#e6e6e6 40%,#dcdcdc);border:1px solid #a4a4ae;border-radius:3px"></div><div class="a" style="left:481px;top:740px;width:77px;height:57px;background:linear-gradient(#efefef,#e6e6e6 40%,#dcdcdc);border:1px solid #a4a4ae;border-radius:3px"></div><div class="a" style="left:561px;top:740px;width:77px;height:57px;background:linear-gradient(#efefef,#e6e6e6 40%,#dcdcdc);border:1px solid #a4a4ae;border-radius:3px"></div><div class="a" style="left:641px;top:740px;width:77px;height:57px;background:linear-gradient(#efefef,#e6e6e6 40%,#dcdcdc);border:1px solid #a4a4ae;border-radius:3px"></div><div class="a" style="left:721px;top:740px;width:77px;height:57px;background:linear-gradient(#efefef,#e6e6e6 40%,#dcdcdc);border:1px solid #a4a4ae;border-radius:3px"></div><div class="a" style="left:801px;top:740px;width:77px;height:57px;background:linear-gradient(#efefef,#e6e6e6 40%,#dcdcdc);border:1px solid #a4a4ae;border-radius:3px"></div>
<div class="a" style="left:879px;top:740px;width:79px;height:58px;background:#a6a6ae"></div>
<div class="a" style="left:880px;top:740px;width:77px;height:57px;background:#fff"></div>
<div class="a" style="left:880px;top:740px;width:27px;height:57px;background:#006847"></div>
<div class="a" style="left:932px;top:740px;width:25px;height:57px;background:#e01020"></div>
<div class="a" style="left:960px;top:740px;width:319px;height:59px;background:#d9d9d9;border:2px solid #1a1e34;border-right:0"></div>

<!-- icons overlay -->
<svg class="a" style="left:0;top:0" width="1279" height="799" viewBox="0 0 1279 799">
  <defs>
    <linearGradient id="blu" x1="0" y1="0" x2="1" y2="1"><stop offset="0" stop-color="#2452b8"/><stop offset="1" stop-color="#3a9ae6"/></linearGradient>
    <linearGradient id="bluv" x1="0" y1="0" x2="0" y2="1"><stop offset="0" stop-color="#2a58c0"/><stop offset="1" stop-color="#34a4e8"/></linearGradient>
    <linearGradient id="gold" x1="0" y1="0" x2="1" y2="0"><stop offset="0" stop-color="#f8d878"/><stop offset="1" stop-color="#e8a838"/></linearGradient>
    <pattern id="chk" width="2" height="2" patternUnits="userSpaceOnUse"><rect width="2" height="2" fill="#f5f5f5"/><rect width="1" height="1" fill="#ebebeb"/></pattern>
  </defs>
  <!-- zoom button -->
  <rect x="50.5" y="659.5" width="39" height="38" fill="url(#chk)" stroke="#fff"/>
  <path d="M 50.5 697.5 V 659.5 H 89.5" fill="none" stroke="#8c8c8c"/>
  <line x1="77" y1="685.5" x2="82.5" y2="691.5" stroke="#8f8f8f" stroke-width="3.6" stroke-linecap="round"/>
  <circle cx="68.6" cy="676.2" r="10.6" fill="#cfe0f2" stroke="#a6a6a6" stroke-width="1.8"/>
  <circle cx="68.6" cy="676.2" r="8.8" fill="none" stroke="#eef4fa" stroke-width="1.2"/>
  <rect x="64.5" y="672.3" width="8.2" height="8.2" fill="#c8d8f0" stroke="#006400" stroke-width="3"/>
  <!-- move -->
  <path fill="url(#blu)" d="M109.4 663 L115.5 669.9 L112.2 669.9 L112.2 675.4 L117.8 675.4 L117.8 672 L124.9 678.3 L117.8 684.6 L117.8 681.2 L112.2 681.2 L112.2 686.7 L115.5 686.7 L109.4 693.5 L103.3 686.7 L106.6 686.7 L106.6 681.2 L101 681.2 L101 684.6 L94 678.3 L101 672 L101 675.4 L106.6 675.4 L106.6 669.9 L103.3 669.9 Z"/>
  <!-- vertical arrows -->
  <path fill="url(#bluv)" d="M139.9 664.9 L146 671.5 L142.7 671.5 L142.7 676.6 L137.1 676.6 L137.1 671.5 L133.8 671.5 Z"/>
  <path fill="url(#bluv)" d="M137.1 682.3 L142.7 682.3 L142.7 687.4 L146 687.4 L139.9 693.5 L133.8 687.4 L137.1 687.4 Z"/>
  <!-- ruler -->
  <rect x="152.2" y="665.4" width="10.3" height="27" fill="url(#gold)" stroke="#9a5a18" stroke-width="1"/>
  <path d="M155.5 668 V 690 M155.5 668.5 H159 M155.5 672.5 H158 M155.5 676.5 H159 M155.5 680.5 H158 M155.5 684.5 H159 M155.5 688.5 H158" stroke="#5a78b0" stroke-width="1" fill="none"/>
  <!-- 1:1 -->
  <rect x="175.5" y="664.5" width="28" height="28" rx="3" fill="#e2ebf7" stroke="#4c4e5c"/>
  <rect x="179" y="668" width="21" height="21" fill="#4a80d0"/>
  <!-- pause -->
  <rect x="220.5" y="669.5" width="6.5" height="19" fill="url(#bluv)" stroke="#1a50c8"/>
  <rect x="231.3" y="669.5" width="6.5" height="19" fill="url(#bluv)" stroke="#1a50c8"/>
  <!-- range icon -->
  <rect x="266.3" y="664.5" width="6.4" height="27.8" rx="3.2" fill="#f8e08a" stroke="#c48a34"/>
  <line x1="269.5" y1="668" x2="269.5" y2="689" stroke="#4a5a90" stroke-width="1"/>
  <path fill="url(#blu)" d="M253.6 670.7 L259.5 665.3 L259.5 668.2 L265 668.2 L265 673.8 L259.5 673.8 L259.5 676.8 Z"/>
  <path fill="url(#blu)" d="M285.4 685 L279.3 679.2 L279.3 682.2 L273.9 682.2 L273.9 687.5 L279.3 687.5 L279.3 690.6 Z"/>
  <!-- home -->
  <path fill="#5a5257" d="M39.6 747.8 L60.9 768.4 L18.5 768.4 Z"/>
  <path fill="#5a5257" d="M21.5 769.6 H57.5 V789 H47.1 V779.5 H38.1 V789 H21.5 Z"/>
  <!-- alert window -->
  <rect x="99.4" y="748.4" width="40.2" height="40" fill="none" stroke="#5a5257" stroke-width="1.4"/>
  <rect x="98.8" y="747.8" width="41.4" height="4.4" fill="#5a5257"/>
  <circle cx="131.8" cy="750" r="0.9" fill="#ddd"/><circle cx="134.6" cy="750" r="0.9" fill="#ddd"/><circle cx="137.4" cy="750" r="0.9" fill="#ddd"/>
  <path fill="#5a5257" d="M120 756.1 L134.4 784 L105.6 784 Z"/>
  <rect x="117.5" y="764" width="4.6" height="12" fill="#e6e6e6"/>
  <rect x="117.5" y="778" width="4.6" height="4.7" fill="#e6e6e6"/>
  <!-- person -->
  <circle cx="758.4" cy="754.3" r="3.3" fill="none" stroke="#5a5257" stroke-width="1.5"/>
  <path fill="#5a5257" d="M751.9 760.5 Q751.9 759 753.4 759 H763.7 Q765.2 759 765.2 760.5 V774 H751.9 Z"/>
  <rect x="754.2" y="773.5" width="3.9" height="16.4" fill="#5a5257"/>
  <rect x="758.9" y="773.5" width="3.9" height="16.4" fill="#5a5257"/>
  <!-- power -->
  <rect x="817.7" y="748.9" width="41.8" height="41" fill="#585256"/>
  <circle cx="838.7" cy="769.5" r="13" fill="none" stroke="#e2e2e2" stroke-width="1.8"/>
  <rect x="837.6" y="759" width="2.2" height="18" fill="#e2e2e2"/>
  <!-- eagle -->
  <path d="M914 766 Q913 760 918 758 Q923 757 926 762 L927 767 Q927 771 923 771.5 L917 771 Q914 770 914 766 Z" fill="#8a4a18"/>
  <path d="M916 761 L919 759.5 L921 762 L918 764 Z M920 765 L923 763 L925 767 L921 768 Z" fill="#1e120c" opacity="0.75"/>
  <path d="M915.5 764 L918 762 L919 766 Z M922 760 L924 761 L923 763 Z" fill="#d98a30"/>
  <path d="M912 771 Q918 775 925 772.5" fill="none" stroke="#2a7080" stroke-width="1.3"/>
  <path d="M914 775 Q919 779 924 775" fill="none" stroke="#3a98e0" stroke-width="1.5"/>
  <rect x="917.5" y="775" width="3" height="2.2" fill="#f0a030"/>
  <path d="M914 778.5 H923" stroke="#7a8040" stroke-width="0.9"/>
  <g fill="#7a8040"><rect x="908" y="768" width="1.6" height="1.6"/><rect x="909.5" y="772" width="1.6" height="1.6"/><rect x="927" y="768.5" width="1.4" height="1.6"/><rect x="926" y="775" width="1.6" height="1.6"/><rect x="911.5" y="776" width="1.2" height="1.2"/><rect x="912.5" y="761" width="1.2" height="1.4"/></g>
  <circle cx="919.5" cy="779.5" r="0.7" fill="#e02020"/><circle cx="925.5" cy="772.5" r="0.7" fill="#e02020"/>
</svg>
<div class='t' style='left:98.51px;top:21.03px;font-family:"Liberation Sans", sans-serif;font-size:16.5px;font-weight:bold;color:#2b2f4c;transform-origin:0 0;transform:scaleX(1.0870);'>Estado de maquina: Modo Automatico</div>
<div class='t' style='left:98.52px;top:36.63px;font-family:"Liberation Sans", sans-serif;font-size:16.5px;font-weight:bold;color:#2b2f4c;transform-origin:0 0;transform:scaleX(1.0805);'>Estado ciclo automatico: pausado</div>
<div class='t' style='left:593.40px;top:5.09px;font-family:"Liberation Sans", sans-serif;font-size:16.2px;font-weight:bold;color:#000;transform-origin:0 0;transform:scaleX(1.1041);'>Graph-DT</div>
<div class='t' style='left:1193.35px;top:7.66px;font-family:"Liberation Sans", sans-serif;font-size:16px;font-weight:normal;color:#0a0a14;transform-origin:0 0;transform:scaleX(1.0456);'>02/03/2019</div>
<div class='t' style='left:1176.91px;top:37.96px;font-family:"Liberation Sans", sans-serif;font-size:16px;font-weight:normal;color:#0a0a14;transform-origin:0 0;transform:scaleX(1.0879);'>3:08:12 p. m.</div>
<div class='t' style='left:1.10px;top:50.58px;font-family:"Liberation Sans", sans-serif;font-size:9px;font-weight:normal;color:#5a5a5c;transform-origin:0 0;transform:scaleX(0.9474);'>Technika Zgrzewalnicza</div>
<div class='t' style='left:30.13px;top:64.64px;font-family:"Liberation Sans", sans-serif;font-size:12px;font-weight:bold;color:#ffffff;transform-origin:0 0;transform:scaleX(1.1667);'>N.º.</div>
<div class='t' style='left:98.46px;top:64.64px;font-family:"Liberation Sans", sans-serif;font-size:12px;font-weight:bold;color:#ffffff;transform-origin:0 0;transform:scaleX(1.0444);'>Hora</div>
<div class='t' style='left:192.97px;top:64.64px;font-family:"Liberation Sans", sans-serif;font-size:12px;font-weight:bold;color:#ffffff;transform-origin:0 0;transform:scaleX(1.0294);'>Fecha</div>
<div class='t' style='left:285.55px;top:64.64px;font-family:"Liberation Sans", sans-serif;font-size:12px;font-weight:bold;color:#ffffff;transform-origin:0 0;transform:scaleX(1.0513);'>Estado</div>
<div class='t' style='left:339.50px;top:64.64px;font-family:"Liberation Sans", sans-serif;font-size:12px;font-weight:bold;color:#ffffff;transform-origin:0 0;transform:scaleX(1.0323);'>Texto</div>
<div class='t' style='left:1145.50px;top:64.64px;font-family:"Liberation Sans", sans-serif;font-size:12px;font-weight:bold;color:#ffffff;transform-origin:0 0;transform:scaleX(1.0449);'>Acusar grupo</div>
<div class='t' style='left:180.39px;top:671.15px;font-family:"Liberation Sans", sans-serif;font-size:14px;font-weight:bold;color:#fff;transform-origin:0 0;transform:scaleX(0.8579);'>1:1</div>
<div class='t' style='left:41.73px;top:168.30px;font-family:"Liberation Sans", sans-serif;font-size:13px;font-weight:bold;color:#ff0000;transform-origin:0 0;transform:scaleX(0.9742);'>Sistema de presión izquierdo: camino</div>
<div class='t' style='left:41.73px;top:187.30px;font-family:"Liberation Sans", sans-serif;font-size:13px;font-weight:bold;color:#3e64ff;transform-origin:0 0;transform:scaleX(0.9733);'>Sistema de presión derecha: camino</div>
<div class='t' style='left:884.54px;top:177.10px;font-family:"Liberation Sans", sans-serif;font-size:15px;font-weight:bold;color:#2b2f4c;transform-origin:0 0;transform:scaleX(1.0583);'>Número de serie:</div>
<div class='t' style='left:1033.40px;top:175.36px;font-family:"Liberation Sans", sans-serif;font-size:18px;font-weight:bold;color:#2b2f4c;transform-origin:0 0;transform:scaleX(1.1042);'>54367</div>
<div class='t' style='left:1131.00px;top:711.66px;font-family:"Liberation Sans", sans-serif;font-size:16px;font-weight:bold;color:#2b2f4c;transform-origin:0 0;transform:scaleX(1.1521);'>Tiempo [mS]</div>
<div class='t' style='left:107.22px;top:712.76px;font-family:"Liberation Sans", sans-serif;font-size:16px;font-weight:bold;color:#fff;transform-origin:0 0;transform:scaleX(1.4815);'><<<</div>
<div class='t' style='left:282.92px;top:712.76px;font-family:"Liberation Sans", sans-serif;font-size:16px;font-weight:bold;color:#fff;transform-origin:0 0;transform:scaleX(1.4815);'>>>></div>
<div class='t' style='left:433.51px;top:712.33px;font-family:"Liberation Sans", sans-serif;font-size:16.5px;font-weight:bold;color:#fff;transform-origin:0 0;transform:scaleX(1.1893);'>IMPRIMIR</div>
<div class='t' style='left:180.30px;top:758.21px;font-family:"Liberation Sans", sans-serif;font-size:10.5px;font-weight:bold;color:#2b2f4c;transform-origin:0 0;transform:scaleX(0.9838);'>Control</div>
<div class='t' style='left:180.55px;top:769.91px;font-family:"Liberation Sans", sans-serif;font-size:10.5px;font-weight:bold;color:#2b2f4c;transform-origin:0 0;transform:scaleX(1.0029);'>Manual</div>
<div class='t' style='left:252.85px;top:764.21px;font-family:"Liberation Sans", sans-serif;font-size:10.5px;font-weight:bold;color:#2b2f4c;transform-origin:0 0;transform:scaleX(0.9545);'>Tecnologia</div>
<div class='t' style='left:345.68px;top:757.11px;font-family:"Liberation Sans", sans-serif;font-size:10.5px;font-weight:bold;color:#2b2f4c;transform-origin:0 0;transform:scaleX(0.9741);'>Modo</div>
<div class='t' style='left:327.00px;top:768.91px;font-family:"Liberation Sans", sans-serif;font-size:10.5px;font-weight:bold;color:#2b2f4c;transform-origin:0 0;transform:scaleX(0.9939);'>de Rearmado</div>
<div class='t' style='left:411.25px;top:758.51px;font-family:"Liberation Sans", sans-serif;font-size:10.5px;font-weight:bold;color:#2b2f4c;transform-origin:0 0;transform:scaleX(0.9737);'>Calibracion</div>
<div class='t' style='left:409.65px;top:770.21px;font-family:"Liberation Sans", sans-serif;font-size:10.5px;font-weight:bold;color:#2b2f4c;transform-origin:0 0;transform:scaleX(0.9845);'>de Maquina</div>
<div class='t' style='left:493.40px;top:758.51px;font-family:"Liberation Sans", sans-serif;font-size:10.5px;font-weight:bold;color:#2b2f4c;transform-origin:0 0;transform:scaleX(0.9556);'>Codificado</div>
<div class='t' style='left:505.88px;top:770.21px;font-family:"Liberation Sans", sans-serif;font-size:10.5px;font-weight:bold;color:#2b2f4c;transform-origin:0 0;transform:scaleX(1.0739);'>RFID</div>
<div class='t' style='left:563.70px;top:759.71px;font-family:"Liberation Sans", sans-serif;font-size:10.5px;font-weight:bold;color:#2b2f4c;transform-origin:0 0;transform:scaleX(0.9803);'>Configuracion</div>
<div class='t' style='left:583.30px;top:771.01px;font-family:"Liberation Sans", sans-serif;font-size:10.5px;font-weight:bold;color:#2b2f4c;transform-origin:0 0;transform:scaleX(0.9500);'>Global</div>
<div class='t' style='left:653.70px;top:763.61px;font-family:"Liberation Sans", sans-serif;font-size:10.5px;font-weight:bold;color:#2b2f4c;'>Registros</div>
<div class='t' style='left:1007.49px;top:749.62px;font-family:"Liberation Sans", sans-serif;font-size:12.5px;font-weight:normal;color:#2b2f4c;transform-origin:0 0;transform:scaleX(1.1083);-webkit-text-stroke:0.3px #2b2f4c;'>Primer nombre:</div>
<div class='t' style='left:1104.51px;top:749.62px;font-family:"Liberation Sans", sans-serif;font-size:12.5px;font-weight:normal;color:#2b2f4c;transform-origin:0 0;transform:scaleX(1.0861);-webkit-text-stroke:0.3px #2b2f4c;'>Serwis</div>
<div class='t' style='left:1049.00px;top:763.22px;font-family:"Liberation Sans", sans-serif;font-size:12.5px;font-weight:normal;color:#2b2f4c;transform-origin:0 0;transform:scaleX(1.1213);-webkit-text-stroke:0.3px #2b2f4c;'>Apellido:</div>
<div class='t' style='left:1104.51px;top:763.22px;font-family:"Liberation Sans", sans-serif;font-size:12.5px;font-weight:normal;color:#2b2f4c;transform-origin:0 0;transform:scaleX(1.0941);-webkit-text-stroke:0.3px #2b2f4c;'>Smoltech</div>
<div class='t' style='left:1006.05px;top:776.62px;font-family:"Liberation Sans", sans-serif;font-size:12.5px;font-weight:normal;color:#2b2f4c;transform-origin:0 0;transform:scaleX(1.0511);-webkit-text-stroke:0.3px #2b2f4c;'>Nivel de acceso:</div>
<div class='t' style='left:1104.50px;top:776.62px;font-family:"Liberation Sans", sans-serif;font-size:12.5px;font-weight:normal;color:#2b2f4c;transform-origin:0 0;transform:scaleX(1.1025);-webkit-text-stroke:0.3px #2b2f4c;'>Servicio de fabricante</div>
<div class='t' style='left:48.14px;top:602.56px;font-family:"Liberation Serif", serif;font-size:17px;font-weight:bold;color:#000;transform-origin:0 0;transform:scaleX(1.1625);'>16</div>
<div class='t' style='left:48.14px;top:568.26px;font-family:"Liberation Serif", serif;font-size:17px;font-weight:bold;color:#000;transform-origin:0 0;transform:scaleX(1.1625);'>17</div>
<div class='t' style='left:48.14px;top:527.26px;font-family:"Liberation Serif", serif;font-size:17px;font-weight:bold;color:#000;transform-origin:0 0;transform:scaleX(1.1625);'>18</div>
<div class='t' style='left:48.14px;top:486.26px;font-family:"Liberation Serif", serif;font-size:17px;font-weight:bold;color:#000;transform-origin:0 0;transform:scaleX(1.1625);'>19</div>
<div class='t' style='left:48.14px;top:445.26px;font-family:"Liberation Serif", serif;font-size:17px;font-weight:bold;color:#000;transform-origin:0 0;transform:scaleX(1.1625);'>20</div>
<div class='t' style='left:48.06px;top:404.26px;font-family:"Liberation Serif", serif;font-size:17px;font-weight:bold;color:#000;transform-origin:0 0;transform:scaleX(1.2400);'>21</div>
<div class='t' style='left:48.06px;top:363.26px;font-family:"Liberation Serif", serif;font-size:17px;font-weight:bold;color:#000;transform-origin:0 0;transform:scaleX(1.2400);'>22</div>
<div class='t' style='left:48.14px;top:322.26px;font-family:"Liberation Serif", serif;font-size:17px;font-weight:bold;color:#000;transform-origin:0 0;transform:scaleX(1.1625);'>23</div>
<div class='t' style='left:48.14px;top:281.26px;font-family:"Liberation Serif", serif;font-size:17px;font-weight:bold;color:#000;transform-origin:0 0;transform:scaleX(1.1625);'>24</div>
<div class='t' style='left:48.14px;top:240.26px;font-family:"Liberation Serif", serif;font-size:17px;font-weight:bold;color:#000;transform-origin:0 0;transform:scaleX(1.1625);'>25</div>
<div class='t' style='left:48.14px;top:205.76px;font-family:"Liberation Serif", serif;font-size:17px;font-weight:bold;color:#000;transform-origin:0 0;transform:scaleX(1.1625);'>26</div>
<div class='t' style='left:76.83px;top:632.78px;font-family:"Liberation Serif", serif;font-size:16.5px;font-weight:bold;color:#000;transform-origin:0 0;transform:scaleX(1.3714);'>0</div>
<div class='t' style='left:160.47px;top:632.78px;font-family:"Liberation Serif", serif;font-size:16.5px;font-weight:bold;color:#000;transform-origin:0 0;transform:scaleX(1.2826);'>500</div>
<div class='t' style='left:252.99px;top:632.78px;font-family:"Liberation Serif", serif;font-size:16.5px;font-weight:bold;color:#000;transform-origin:0 0;transform:scaleX(1.2063);'>1000</div>
<div class='t' style='left:350.99px;top:632.78px;font-family:"Liberation Serif", serif;font-size:16.5px;font-weight:bold;color:#000;transform-origin:0 0;transform:scaleX(1.2063);'>1500</div>
<div class='t' style='left:447.99px;top:632.78px;font-family:"Liberation Serif", serif;font-size:16.5px;font-weight:bold;color:#000;transform-origin:0 0;transform:scaleX(1.2063);'>2000</div>
<div class='t' style='left:545.99px;top:632.78px;font-family:"Liberation Serif", serif;font-size:16.5px;font-weight:bold;color:#000;transform-origin:0 0;transform:scaleX(1.2063);'>2500</div>
<div class='t' style='left:642.99px;top:632.78px;font-family:"Liberation Serif", serif;font-size:16.5px;font-weight:bold;color:#000;transform-origin:0 0;transform:scaleX(1.2063);'>3000</div>
<div class='t' style='left:740.99px;top:632.78px;font-family:"Liberation Serif", serif;font-size:16.5px;font-weight:bold;color:#000;transform-origin:0 0;transform:scaleX(1.2063);'>3500</div>
<div class='t' style='left:839.20px;top:632.78px;font-family:"Liberation Serif", serif;font-size:16.5px;font-weight:bold;color:#000;transform-origin:0 0;transform:scaleX(1.1697);'>4000</div>
<div class='t' style='left:937.20px;top:632.78px;font-family:"Liberation Serif", serif;font-size:16.5px;font-weight:bold;color:#000;transform-origin:0 0;transform:scaleX(1.1697);'>4500</div>
<div class='t' style='left:1032.99px;top:632.78px;font-family:"Liberation Serif", serif;font-size:16.5px;font-weight:bold;color:#000;transform-origin:0 0;transform:scaleX(1.2063);'>5000</div>
<div class='t' style='left:1130.99px;top:632.78px;font-family:"Liberation Serif", serif;font-size:16.5px;font-weight:bold;color:#000;transform-origin:0 0;transform:scaleX(1.2063);'>5500</div>
<div class='t' style='left:1208.70px;top:632.78px;font-family:"Liberation Serif", serif;font-size:16.5px;font-weight:bold;color:#000;transform-origin:0 0;transform:scaleX(1.1697);'>6000</div>
</body></html>
